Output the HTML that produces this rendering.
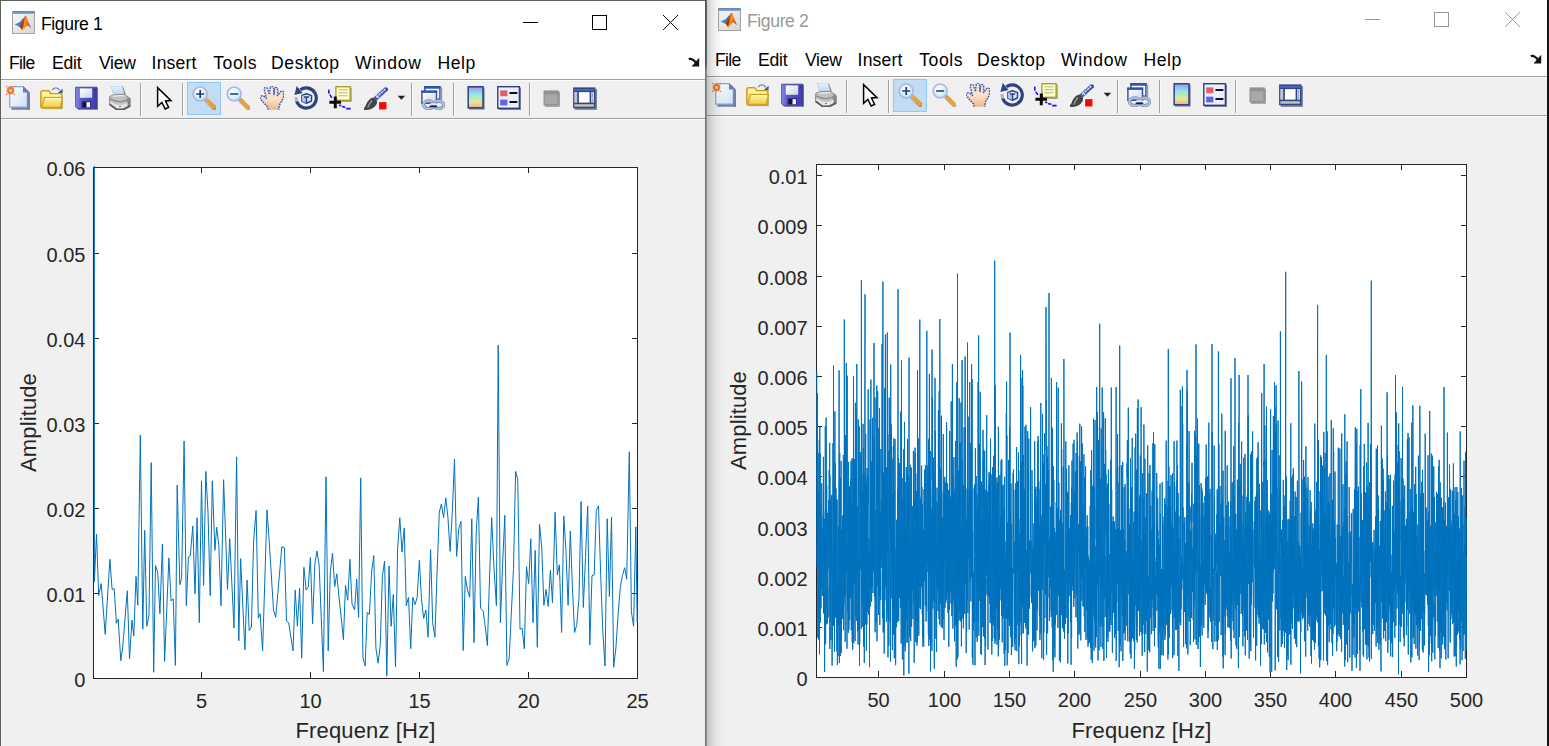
<!DOCTYPE html>
<html lang="de"><head><meta charset="utf-8"><title>Figure 1 / Figure 2</title>
<style>
html,body{margin:0;padding:0}
body{width:1549px;height:746px;overflow:hidden;background:#f0f0f0;font-family:"Liberation Sans", sans-serif;position:relative}
.abs{position:absolute}
.win{position:absolute;overflow:hidden;background:#f0f0f0}
.white{position:absolute;left:0;top:0;height:79px;background:#fff}
.title{position:absolute;left:41px;top:12px;font-size:17.6px;line-height:24px;white-space:nowrap}
.mi{position:absolute;top:50.5px;font-size:17.6px;line-height:24px;color:#000;white-space:nowrap}
.hl{position:absolute;left:0;height:1px;background:#a0a0a0;border-bottom:1px solid #fbfbfb}
.tb{position:absolute}
#b-top{position:absolute;left:0;top:0;width:707px;height:1px;background:#5b635c}
#b-left{position:absolute;left:0;top:0;width:1px;height:746px;background:#5b635c}
#b-mid{position:absolute;left:705px;top:0;width:1px;height:746px;background:linear-gradient(#4d554e 0,#4d554e 64px,#6a726b 70px,#6a726b 100%)}
#b-mid2{position:absolute;left:706px;top:0;width:1px;height:746px;background:linear-gradient(#5f6660 0,#5f6660 64px,#8f948f 70px,#8f948f 100%)}
#b-right{position:absolute;left:1547px;top:0;width:2px;height:746px;background:#141414}
#shadow{position:absolute;left:707px;top:0;width:20px;height:746px;background:linear-gradient(90deg,rgba(0,0,0,.2),rgba(0,0,0,.105) 25%,rgba(0,0,0,.045) 50%,rgba(0,0,0,.012) 75%,rgba(0,0,0,0))}
</style></head>
<body>
<svg width="0" height="0" style="position:absolute">
<defs>
<linearGradient id="gPage" x1="0" y1="0" x2="1" y2="1"><stop offset="0" stop-color="#ffffff"/><stop offset="1" stop-color="#cfe0f6"/></linearGradient>
<linearGradient id="gFold" x1="0" y1="0" x2="0" y2="1"><stop offset="0" stop-color="#fff6a2"/><stop offset="1" stop-color="#f3cc4a"/></linearGradient>
<linearGradient id="gFlop" x1="0" y1="0" x2="1" y2="0"><stop offset="0" stop-color="#8d8de6"/><stop offset="0.25" stop-color="#5a5ac8"/><stop offset="1" stop-color="#3d3da6"/></linearGradient>
<linearGradient id="gLabel" x1="0" y1="0" x2="1" y2="1"><stop offset="0" stop-color="#ffffff"/><stop offset="1" stop-color="#c9d3e6"/></linearGradient>
<radialGradient id="gLens" cx="0.4" cy="0.35" r="0.7"><stop offset="0" stop-color="#ffffff"/><stop offset="0.6" stop-color="#d8f2f4"/><stop offset="1" stop-color="#a8dfe6"/></radialGradient>
<linearGradient id="gHandle" x1="0" y1="0" x2="1" y2="0"><stop offset="0" stop-color="#f4b860"/><stop offset="1" stop-color="#d88a20"/></linearGradient>
<linearGradient id="gSkin" x1="0" y1="0" x2="0" y2="1"><stop offset="0" stop-color="#fee8d2"/><stop offset="0.55" stop-color="#fbe0c6"/><stop offset="1" stop-color="#e9b888"/></linearGradient>
<linearGradient id="gCbar" x1="0" y1="0" x2="0" y2="1"><stop offset="0.03" stop-color="#a09af0"/><stop offset="0.36" stop-color="#92e8e6"/><stop offset="0.72" stop-color="#e8e890"/><stop offset="1" stop-color="#f2ac8e"/></linearGradient>
<linearGradient id="gIcoBox" x1="0" y1="0" x2="1" y2="1"><stop offset="0" stop-color="#fafafa"/><stop offset="1" stop-color="#d4d4d4"/></linearGradient>
<linearGradient id="gIcoBar" x1="0" y1="0" x2="0" y2="1"><stop offset="0" stop-color="#4f7fb5"/><stop offset="1" stop-color="#86b4dc"/></linearGradient>
<linearGradient id="gMl1" x1="0" y1="0" x2="1" y2="0"><stop offset="0" stop-color="#4a9ad8"/><stop offset="1" stop-color="#2f6fb0"/></linearGradient>
<linearGradient id="gMl2" x1="0" y1="0" x2="1" y2="0.4"><stop offset="0" stop-color="#9a2a16"/><stop offset="0.42" stop-color="#e0641a"/><stop offset="0.58" stop-color="#f59a1c"/><stop offset="0.8" stop-color="#e2621c"/><stop offset="1" stop-color="#b23a1a"/></linearGradient>
<linearGradient id="gPrn" x1="0" y1="0" x2="0" y2="1"><stop offset="0" stop-color="#d8d8d8"/><stop offset="1" stop-color="#8a8a8a"/></linearGradient>
<linearGradient id="gPaper" x1="0" y1="0" x2="0" y2="1"><stop offset="0" stop-color="#e8f2fc"/><stop offset="1" stop-color="#b4d2f2"/></linearGradient>
<linearGradient id="gWin" x1="0" y1="0" x2="1" y2="1"><stop offset="0" stop-color="#ffffff"/><stop offset="1" stop-color="#cdd6e4"/></linearGradient>
<linearGradient id="gShadow" x1="0" y1="0" x2="1" y2="0"><stop offset="0" stop-color="#000" stop-opacity="0.22"/><stop offset="0.5" stop-color="#000" stop-opacity="0.07"/><stop offset="1" stop-color="#000" stop-opacity="0"/></linearGradient>

<symbol id="i-matlab" viewBox="0 0 23 23">
 <rect x="0.5" y="0.5" width="22" height="22" fill="url(#gIcoBox)" stroke="#a4a4a4"/>
 <rect x="0.4" y="0.3" width="22.2" height="2.7" fill="url(#gIcoBar)"/>
 <path d="M2.6 13.6 L8.0 10.9 L11.6 6.6 L9.6 13.4 L7.4 15.8 Z" fill="url(#gMl1)"/>
 <path d="M7.4 15.8 C9.6 13.4 11.0 8.6 12.4 6.0 C13.2 4.4 14.0 4.4 14.7 6.0 C15.9 9.0 17.3 14.6 19.2 16.8 C17.2 15.8 15.8 13.6 14.8 14.8 C13.4 16.4 11.8 19.0 10.2 19.6 C9.4 18.0 8.6 16.6 7.4 15.8 Z" fill="url(#gMl2)"/>
 <path d="M7.4 15.8 C9.4 13.6 10.8 9.4 12.2 6.4 C12.2 10 11.6 14.4 10.2 19.6 C9.4 18 8.6 16.6 7.4 15.8 Z" fill="#8f2a16" opacity="0.75"/>
 <path d="M10.2 19.6 C11.6 18.8 13.0 16.8 14.0 15.4 C12.8 15.8 11.4 16.8 9.7 18.4 Z" fill="#f9c21f"/>
</symbol>

<symbol id="i-new" viewBox="0 0 24 24">
 <path d="M5.4 2.4 H17.6 L23.9 8.4 V23.7 H5.4 Z" fill="#74809f"/>
 <path d="M3.7 0.7 H17 L21.3 5 V21.1 H3.7 Z" fill="url(#gPage)" stroke="#86a6e0" stroke-width="1.2"/>
 <path d="M17 0.2 L23.9 6.4 H17 Z" fill="#7579b9"/>
 <path d="M21.3 6.4 H23.9 V23.7 H21.3 Z" fill="#74809f"/>
 <path d="M17 0.2 L23.9 6.4 H21.3 L17 2.4Z" fill="#7478b4"/>
 <g fill="#e06a42"><rect x="-0.1" y="-0.1" width="1.3" height="1.3"/><rect x="7.8" y="-0.1" width="1.3" height="1.3"/><rect x="-0.1" y="7.8" width="1.3" height="1.3"/><rect x="7.8" y="7.8" width="1.3" height="1.3"/></g>
 <circle cx="4.5" cy="4.5" r="3.9" fill="#ea8a62"/>
 <circle cx="4.5" cy="4.5" r="2.9" fill="#e6733f"/>
 <rect x="3.2" y="3.2" width="2.6" height="2.6" fill="#f6d85c"/>
</symbol>

<symbol id="i-open" viewBox="0 0 24 24">
 <path d="M12.2 4.2 C13.6 1.2 17.6 0.8 19.6 4.4" fill="none" stroke="#7088b0" stroke-width="1.3"/>
 <path d="M18 6.8 L22.6 2.8 L22.6 7.4 Z" fill="#3f5a92"/>
 <path d="M2.6 21.6 H22 L23 12 V23.2 H4 Z" fill="#8a98b0" opacity="0.6"/>
 <path d="M0.8 6.6 Q0.8 4.7 2.8 4.7 H8.2 Q9.4 4.7 10 6 L10.8 7.6 H20 Q22 7.6 22 9.6 V20 Q22 22.2 19.8 22.2 H3 Q0.8 22.2 0.8 20 Z" fill="#f6dc62" stroke="#c89a1c" stroke-width="1.3"/>
 <path d="M2.2 5.9 H8.4 L9.6 8.6 H20.6 V10.6 H2.2 Z" fill="#fdf3a6"/>
 <path d="M1.6 21.2 L4.6 11.6 H22.4 L20.4 21.4 Z" fill="url(#gFold)" stroke="#cf9f1e" stroke-width="1.2" stroke-linejoin="round"/>
 <path d="M5.4 12.6 H21" stroke="#fffbd0" stroke-width="1"/>
</symbol>

<symbol id="i-save" viewBox="0 0 24 24">
 <path d="M2.6 2.2 H24 V24 H4.6 L2.6 22 Z" fill="#6a6e9a" opacity="0.75"/>
 <path d="M1.6 1.2 H23 V22.6 H3.4 L1.6 20.8 Z" fill="url(#gFlop)" stroke="#3b3b9c" stroke-width="0.8"/>
 <rect x="5.8" y="2.4" width="12.4" height="9.4" fill="url(#gLabel)"/>
 <rect x="20" y="3.4" width="1.4" height="1.8" fill="#2c2c80"/>
 <rect x="7.6" y="15" width="9.4" height="6.6" fill="#2f2f86"/>
 <rect x="8.6" y="16.2" width="3.4" height="5" fill="#16162a"/>
 <rect x="12.6" y="16.2" width="3.4" height="5" fill="#f2f4fa"/>
</symbol>

<symbol id="i-print" viewBox="0 0 24 24">
 <path d="M13.8 0.2 L15 0.7 L17.8 8.2 L16.2 8.6 Z" fill="#77777c"/>
 <path d="M3 0.2 H13.8 L16.4 8.6 L5.8 9.4 Z" fill="url(#gPaper)" stroke="#b4c8ee" stroke-width="0.6"/>
 <path d="M1.6 10.6 L5.4 8.8 L16.8 8.4 L22.2 12.6 V20.2 L15.4 23.8 H8.6 L1.6 18.6 Z" fill="#c2c2c2" stroke="#808080" stroke-width="0.9" stroke-linejoin="round"/>
 <path d="M19.4 10.6 L22.2 12.8 V20.2 L19.4 21.8 Z" fill="#858585"/>
 <path d="M2 12.8 Q8 15.8 12 15.6 Q16 15.6 21.6 12.6" fill="none" stroke="#8e8e8e" stroke-width="1.3"/>
 <path d="M2.2 15.6 L9 18.8 H15.2 L19.4 16.8 V20.6 L15.2 22.6 H9 L2.2 17.8 Z" fill="#e6e6e6"/>
 <path d="M1.6 18.2 L8.6 23.4 H15.4 L22.2 19.8 " fill="none" stroke="#5e5e5e" stroke-width="1.9"/>
 <path d="M5 10.2 Q10 9.4 16 9.6" fill="none" stroke="#ededed" stroke-width="1.2"/>
 <rect x="17.8" y="14.2" width="1.6" height="1.6" fill="#58b058"/>
 <rect x="11.2" y="19.8" width="1.6" height="1.2" fill="#6a6ac8"/>
</symbol>

<symbol id="i-arrow" viewBox="0 0 24 24">
 <path d="M5.6 1.6 V20.4 L9.9 16.4 L13.2 23 L16.6 21.3 L13.5 15 L19 14.6 Z" fill="#fff" stroke="#000" stroke-width="1.5" stroke-linejoin="miter"/>
</symbol>

<symbol id="i-zoomin" viewBox="0 0 24 24">
 <path d="M14.2 13.6 L22.4 21.8" stroke="#8a6a4a" stroke-width="4.6" stroke-linecap="round" opacity="0.55" transform="translate(0.6,0.9)"/>
 <path d="M13 12.6 L15.4 15" stroke="#8f98c8" stroke-width="2.6"/>
 <path d="M15.6 14.8 L22 21.2" stroke="url(#gHandle)" stroke-width="4.2" stroke-linecap="round"/>
 <path d="M15.6 14.8 L22 21.2" stroke="#eaa03a" stroke-width="3" stroke-linecap="round"/>
 <circle cx="8.2" cy="8" r="7" fill="url(#gLens)" stroke="#b2b6e6" stroke-width="1.7"/>
 <path d="M8.2 4 V12 M4.2 8 H12.2" stroke="#1f3c7e" stroke-width="1.7"/>
</symbol>

<symbol id="i-zoomout" viewBox="0 0 24 24">
 <path d="M14.2 13.6 L22.4 21.8" stroke="#8a6a4a" stroke-width="4.6" stroke-linecap="round" opacity="0.55" transform="translate(0.6,0.9)"/>
 <path d="M13 12.6 L15.4 15" stroke="#8f98c8" stroke-width="2.6"/>
 <path d="M15.6 14.8 L22 21.2" stroke="#eaa03a" stroke-width="3.6" stroke-linecap="round"/>
 <circle cx="8.2" cy="8" r="7" fill="url(#gLens)" stroke="#b2b6e6" stroke-width="1.7"/>
 <path d="M4.2 8 H12.2" stroke="#2a4a8a" stroke-width="1.7"/>
</symbol>

<symbol id="i-hand" viewBox="0 0 24 24">
 <path d="M8.1 23.7 L7.6 21 L3.2 16.3 L0.5 12.6 Q-0.1 10.8 1.6 9.9 Q3 9.5 4.4 10.8 L6.4 12.4 L4.4 4.2 Q3.9 1.8 5.6 1.5 Q7.2 1.3 7.8 3.4 L9.4 8.6 L10.2 2 Q10.3 0.2 11.9 0.2 Q13.6 0.2 13.7 2 L14 8.4 L14.6 3 Q14.9 1.4 16.2 1.5 Q17.8 1.7 17.6 3.4 L17.6 9.4 L20.6 5.8 Q21.8 4.6 23 5.4 Q24.1 6.2 23.6 8 L23.5 11.4 L21.6 15.3 L19.6 18.7 L18.7 23.7 Z" fill="url(#gSkin)"/>
 <path d="M8.1 23.7 L7.6 21 L3.2 16.3 L0.5 12.6 Q-0.1 10.8 1.6 9.9 Q3 9.5 4.4 10.8 L6.4 12.4 L4.4 4.2 Q3.9 1.8 5.6 1.5 Q7.2 1.3 7.8 3.4 L9.4 8.6 L10.2 2 Q10.3 0.2 11.9 0.2 Q13.6 0.2 13.7 2 L14 8.4 L14.6 3 Q14.9 1.4 16.2 1.5 Q17.8 1.7 17.6 3.4 L17.6 9.4 L20.6 5.8 Q21.8 4.6 23 5.4 Q24.1 6.2 23.6 8 L23.5 11.4 L21.6 15.3 L19.6 18.7 L18.7 23.7" fill="none" stroke="#3a5abf" stroke-width="1.5" stroke-dasharray="1.7 1.0" stroke-linejoin="round"/>
</symbol>

<symbol id="i-rotate" viewBox="0 0 24 24">
 <path d="M2.7 15.45 A10.1 10.1 0 0 1 2.14 11.1" fill="none" stroke="#2c4382" stroke-width="3" opacity="0.35"/>
 <path d="M6.4 3.7 A10.1 10.1 0 1 1 2.7 15.45" fill="none" stroke="#2c4382" stroke-width="3.2"/>
 <path d="M2.7 0.1 L0.4 8.9 L8.6 7.0 Z" fill="#2f4684"/>
 <path d="M7.8 9.4 L12.6 7.8 L17.6 9.6 L17.4 15 L12.4 17.2 L7.8 15 Z" fill="#dfe6f5" stroke="#2f4684" stroke-width="1.5" stroke-linejoin="round"/>
 <path d="M7.8 9.4 L12.5 11.2 L12.4 17.2 Z M7.8 9.4 L7.8 15 L12.4 17.2Z" fill="#b4c4e8"/>
 <path d="M10 11 H15.2 M12.5 11 V17" fill="none" stroke="#2f4684" stroke-width="1.4"/>
</symbol>

<symbol id="i-datacursor" viewBox="0 0 24 24">
 <rect x="8.8" y="1.6" width="15" height="14.4" fill="#7f7f60" opacity="0.65"/>
 <rect x="7.9" y="0.7" width="14.2" height="13.6" fill="#fdfdc6" stroke="#a39b32" stroke-width="1.3"/>
 <path d="M10.4 3.8 H19.6 M10.4 6.8 H19.6 M10.4 9.8 H19.6" stroke="#bcb88c" stroke-width="1.1"/>
 <path d="M0.7 3.6 L0.9 7.6 M1.8 8.6 L3.8 11.8" stroke="#1a10f4" stroke-width="1.6"/>
 <path d="M11 19.3 L13.4 19.6 M14.2 20.6 L17.4 21.2 M18.2 22.6 L22.6 22.6" stroke="#1a10f4" stroke-width="1.6"/>
 <path d="M7.3 10.6 V22.2 M1.4 16.3 H13" stroke="#0a0a0a" stroke-width="3"/>
</symbol>

<symbol id="i-brush" viewBox="0 0 24 24">
 <path d="M22.6 2.6 L10.8 13.4" stroke="#4853b4" stroke-width="4.2"/>
 <path d="M22.9 0.9 L24.6 4.6 L20.8 4.2 Z" fill="#2f3a9c"/>
 <path d="M21.4 3 L11.6 12" stroke="#dfe4fb" stroke-width="1.5" stroke-dasharray="2.6 0.7"/>
 <path d="M12.7 9.4 L14.9 11.8" stroke="#eef0fc" stroke-width="1.2"/>
 <path d="M9.2 12 L12.6 15.2 C13 19.6 8.4 23.6 0.6 23.8 C-0.4 22.6 1 21.4 1.8 20.4 C3 17.4 4.6 13 9.2 12 Z" fill="#454545" stroke="#2c2c2c" stroke-width="0.8"/>
 <path d="M8 14.6 C5.6 16.4 5 19.4 3.6 21.6" fill="none" stroke="#9a9a9a" stroke-width="1.4"/>
 <rect x="14.3" y="15.4" width="9" height="8.8" fill="#fdfdfd"/>
 <rect x="15.1" y="16.1" width="7.4" height="7.4" fill="#f20a0a"/>
</symbol>

<symbol id="i-link" viewBox="0 0 24 24">
 <rect x="20" y="1.6" width="1.2" height="12.4" fill="#6a7898" opacity="0.7"/>
 <rect x="3.9" y="0.8" width="15" height="12.4" fill="#f4f6fa" stroke="#30509a" stroke-width="1.4"/>
 <rect x="3.2" y="0.1" width="16.4" height="2.6" fill="#3453a4"/>
 <rect x="0.9" y="5.3" width="14.6" height="12" fill="url(#gWin)" stroke="#30509a" stroke-width="1.4"/>
 <rect x="0.2" y="4.6" width="16" height="2.3" fill="#3453a4"/>
 <ellipse cx="7.6" cy="18.8" rx="5.2" ry="3.9" fill="none" stroke="#b7c7e1" stroke-width="2.7"/>
 <ellipse cx="17.6" cy="18.8" rx="5.2" ry="3.9" fill="none" stroke="#b7c7e1" stroke-width="2.7"/>
 <ellipse cx="7.6" cy="18.8" rx="6.4" ry="5.1" fill="none" stroke="#6c80a6" stroke-width="0.7"/>
 <ellipse cx="17.6" cy="18.8" rx="6.4" ry="5.1" fill="none" stroke="#6c80a6" stroke-width="0.7"/>
 <ellipse cx="7.6" cy="18.8" rx="3.9" ry="2.6" fill="none" stroke="#55698f" stroke-width="0.8"/>
 <ellipse cx="17.6" cy="18.8" rx="3.9" ry="2.6" fill="none" stroke="#55698f" stroke-width="0.8"/>
 <path d="M9.4 20.4 H15.4" stroke="#16264a" stroke-width="1.7" stroke-linecap="round"/>
 <path d="M9.6 18.2 H15.6" stroke="#dfe8f6" stroke-width="1.8" stroke-linecap="round"/>
</symbol>

<symbol id="i-colorbar" viewBox="0 0 24 24">
 <rect x="5" y="1.6" width="15.6" height="22" fill="#66708c" opacity="0.85"/>
 <rect x="4.2" y="0.8" width="14.8" height="21" fill="url(#gCbar)" stroke="#2c3f86" stroke-width="1.5"/>
</symbol>

<symbol id="i-legend" viewBox="0 0 24 24">
 <rect x="1.6" y="1.6" width="22.4" height="22.4" fill="#5a6488" opacity="0.8"/>
 <rect x="0.8" y="0.7" width="21.6" height="21.6" fill="#e9eef9" stroke="#2c3f86" stroke-width="1.4"/>
 <rect x="3.2" y="4.4" width="7.2" height="5.8" fill="#e26060"/>
 <rect x="3.2" y="13.6" width="7.2" height="5.8" fill="#6262e2"/>
 <path d="M13.2 6.9 H19.6 M13.2 15.9 H19.6" stroke="#111" stroke-width="2" stroke-linecap="round"/>
</symbol>

<symbol id="i-graysq" viewBox="0 0 24 24">
 <rect x="4.7" y="5.6" width="15.2" height="15.2" fill="#9b9b9b"/>
 <rect x="3.5" y="4.4" width="15.2" height="14.8" fill="#929292"/>
 <rect x="4.8" y="8.4" width="12.6" height="9.6" fill="#a9a9a9"/>
</symbol>

<symbol id="i-dock" viewBox="0 0 24 24">
 <rect x="1.6" y="3" width="22.4" height="20.9" fill="#66708c" opacity="0.85"/>
 <rect x="0.1" y="1.4" width="22.3" height="20.8" fill="#2f4585"/>
 <rect x="1" y="2.9" width="20.5" height="1.9" fill="#4a66b8"/>
 <rect x="1.4" y="6.1" width="2.8" height="10.5" fill="#f0f0e6"/>
 <rect x="18.2" y="6.1" width="2.7" height="10.5" fill="#f0f0e6"/>
 <path d="M3.4 6.6 q-1.4 1.2 0 2.4 q-1.4 1.2 0 2.4 q-1.4 1.2 0 2.4 q-1.4 1.2 0 2.4 M19 6.6 q1.4 1.2 0 2.4 q1.4 1.2 0 2.4 q1.4 1.2 0 2.4 q1.4 1.2 0 2.4" fill="none" stroke="#6a7cb0" stroke-width="0.8"/>
 <rect x="5.9" y="6.1" width="10.7" height="10.5" fill="#fff"/>
 <rect x="1.4" y="18.1" width="19.5" height="2.6" fill="#c8c5b6"/>
 <path d="M1.6 18.5 H20.8" stroke="#8e94a8" stroke-width="0.8" stroke-dasharray="1.2 0.9"/>
</symbol>
</defs>
</svg>
<div class="win" style="left:0px;top:0px;width:705px;height:746px">
<div class="white" style="width:705px"></div>
<svg class="abs" style="left:12.3px;top:10.8px" width="23" height="23"><use href="#i-matlab" width="23" height="23"/></svg>
<div class="title" id="title1" style="color:#000;letter-spacing:-0.40px">Figure 1</div>
<svg class="abs" style="left:0px;top:0" width="705" height="45" viewBox="0 0 705 45" shape-rendering="crispEdges"><rect x="523" y="22" width="15" height="1" fill="#000"/><rect x="592.5" y="15.5" width="14" height="14" fill="none" stroke="#000" stroke-width="1"/><path d="M663 15 L678 30 M678 15 L663 30" stroke="#000" stroke-width="0.95" shape-rendering="geometricPrecision"/></svg>
<span class="mi" id="m1_0" style="left:8.90px;letter-spacing:-0.67px">File</span>
<span class="mi" id="m1_1" style="left:52.10px;letter-spacing:-0.27px">Edit</span>
<span class="mi" id="m1_2" style="left:98.90px;letter-spacing:-0.27px">View</span>
<span class="mi" id="m1_3" style="left:151.60px;letter-spacing:0.16px">Insert</span>
<span class="mi" id="m1_4" style="left:213.20px;letter-spacing:0.60px">Tools</span>
<span class="mi" id="m1_5" style="left:271.00px;letter-spacing:0.60px">Desktop</span>
<span class="mi" id="m1_6" style="left:354.90px;letter-spacing:0.72px">Window</span>
<span class="mi" id="m1_7" style="left:437.40px;letter-spacing:0.53px">Help</span>
<svg class="abs" style="left:688px;top:57px" width="13" height="11" viewBox="0 0 13 11"><path d="M0.8 2.2 C3 1 5 2 8.6 6.2" fill="none" stroke="#111" stroke-width="2.2"/><path d="M11.2 0.8 V9.6 H3.6 Z" fill="#111"/></svg>
<div class="hl" style="top:79px;width:705px"></div>
<div class="hl" style="top:118px;width:705px"></div>
<svg class="tb" style="left:0px;top:0px" width="700" height="122" viewBox="0 0 700 122"><rect x="187.5" y="82.5" width="33" height="32" fill="#c2dcf3" stroke="#90c8f6"/><rect x="140" y="83" width="1" height="33" fill="#a0a0a0"/><rect x="141" y="83" width="1" height="33" fill="#fbfbfb"/><rect x="182" y="83" width="1" height="33" fill="#a0a0a0"/><rect x="183" y="83" width="1" height="33" fill="#fbfbfb"/><rect x="411" y="83" width="1" height="33" fill="#a0a0a0"/><rect x="412" y="83" width="1" height="33" fill="#fbfbfb"/><rect x="453" y="83" width="1" height="33" fill="#a0a0a0"/><rect x="454" y="83" width="1" height="33" fill="#fbfbfb"/><rect x="529" y="83" width="1" height="33" fill="#a0a0a0"/><rect x="530" y="83" width="1" height="33" fill="#fbfbfb"/><use href="#i-new" x="6" y="86" width="24" height="24"/><use href="#i-open" x="40" y="86" width="24" height="24"/><use href="#i-save" x="74" y="86" width="24" height="24"/><use href="#i-print" x="108" y="86" width="24" height="24"/><use href="#i-arrow" x="152" y="86" width="24" height="24"/><use href="#i-zoomin" x="192" y="86" width="24" height="24"/><use href="#i-zoomout" x="226" y="86" width="24" height="24"/><use href="#i-hand" x="260" y="86" width="24" height="24"/><use href="#i-rotate" x="294" y="86" width="24" height="24"/><use href="#i-datacursor" x="328" y="86" width="24" height="24"/><use href="#i-brush" x="364" y="86" width="24" height="24"/><use href="#i-link" x="421" y="86" width="24" height="24"/><use href="#i-colorbar" x="464" y="86" width="24" height="24"/><use href="#i-legend" x="497" y="86" width="24" height="24"/><use href="#i-graysq" x="540" y="86" width="24" height="24"/><use href="#i-dock" x="573" y="86" width="24" height="24"/><path d="M397.6 95.8 H405.2 L401.4 99.8 Z" fill="#222"/></svg>
</div>
<div class="win" style="left:706px;top:-3px;width:841px;height:749px">
<div class="white" style="width:841px"></div>
<svg class="abs" style="left:12.3px;top:10.8px" width="23" height="23"><use href="#i-matlab" width="23" height="23"/></svg>
<div class="title" id="title2" style="color:#999;letter-spacing:-0.40px">Figure 2</div>
<svg class="abs" style="left:136px;top:0" width="705" height="45" viewBox="0 0 705 45" shape-rendering="crispEdges"><rect x="523" y="22" width="15" height="1" fill="#999"/><rect x="592.5" y="15.5" width="14" height="14" fill="none" stroke="#999" stroke-width="1"/><path d="M663 15 L678 30 M678 15 L663 30" stroke="#999" stroke-width="0.95" shape-rendering="geometricPrecision"/></svg>
<span class="mi" id="m2_0" style="left:8.90px;letter-spacing:-0.67px">File</span>
<span class="mi" id="m2_1" style="left:52.10px;letter-spacing:-0.27px">Edit</span>
<span class="mi" id="m2_2" style="left:98.90px;letter-spacing:-0.27px">View</span>
<span class="mi" id="m2_3" style="left:151.60px;letter-spacing:0.16px">Insert</span>
<span class="mi" id="m2_4" style="left:213.20px;letter-spacing:0.60px">Tools</span>
<span class="mi" id="m2_5" style="left:271.00px;letter-spacing:0.60px">Desktop</span>
<span class="mi" id="m2_6" style="left:354.90px;letter-spacing:0.72px">Window</span>
<span class="mi" id="m2_7" style="left:437.40px;letter-spacing:0.53px">Help</span>
<svg class="abs" style="left:824px;top:57px" width="13" height="11" viewBox="0 0 13 11"><path d="M0.8 2.2 C3 1 5 2 8.6 6.2" fill="none" stroke="#111" stroke-width="2.2"/><path d="M11.2 0.8 V9.6 H3.6 Z" fill="#111"/></svg>
<div class="hl" style="top:79px;width:841px"></div>
<div class="hl" style="top:118px;width:841px"></div>
<svg class="tb" style="left:0px;top:0px" width="700" height="122" viewBox="0 0 700 122"><rect x="187.5" y="82.5" width="33" height="32" fill="#c2dcf3" stroke="#90c8f6"/><rect x="140" y="83" width="1" height="33" fill="#a0a0a0"/><rect x="141" y="83" width="1" height="33" fill="#fbfbfb"/><rect x="182" y="83" width="1" height="33" fill="#a0a0a0"/><rect x="183" y="83" width="1" height="33" fill="#fbfbfb"/><rect x="411" y="83" width="1" height="33" fill="#a0a0a0"/><rect x="412" y="83" width="1" height="33" fill="#fbfbfb"/><rect x="453" y="83" width="1" height="33" fill="#a0a0a0"/><rect x="454" y="83" width="1" height="33" fill="#fbfbfb"/><rect x="529" y="83" width="1" height="33" fill="#a0a0a0"/><rect x="530" y="83" width="1" height="33" fill="#fbfbfb"/><use href="#i-new" x="6" y="86" width="24" height="24"/><use href="#i-open" x="40" y="86" width="24" height="24"/><use href="#i-save" x="74" y="86" width="24" height="24"/><use href="#i-print" x="108" y="86" width="24" height="24"/><use href="#i-arrow" x="152" y="86" width="24" height="24"/><use href="#i-zoomin" x="192" y="86" width="24" height="24"/><use href="#i-zoomout" x="226" y="86" width="24" height="24"/><use href="#i-hand" x="260" y="86" width="24" height="24"/><use href="#i-rotate" x="294" y="86" width="24" height="24"/><use href="#i-datacursor" x="328" y="86" width="24" height="24"/><use href="#i-brush" x="364" y="86" width="24" height="24"/><use href="#i-link" x="421" y="86" width="24" height="24"/><use href="#i-colorbar" x="464" y="86" width="24" height="24"/><use href="#i-legend" x="497" y="86" width="24" height="24"/><use href="#i-graysq" x="540" y="86" width="24" height="24"/><use href="#i-dock" x="573" y="86" width="24" height="24"/><path d="M397.6 95.8 H405.2 L401.4 99.8 Z" fill="#222"/></svg>
</div>
<svg class="abs" style="left:0;top:0" width="1549" height="746" viewBox="0 0 1549 746"><rect x="93" y="167" width="544" height="511" fill="#fff"/><clipPath id="c1"><rect x="93" y="166" width="545.5" height="513"/></clipPath><g fill="#262626" shape-rendering="crispEdges"><rect x="93" y="167" width="545" height="1"/><rect x="93" y="678" width="545" height="1"/><rect x="93" y="167" width="1" height="512"/><rect x="637" y="167" width="1" height="512"/><rect x="201" y="672" width="1" height="6"/><rect x="201" y="167" width="1" height="6"/><rect x="310" y="672" width="1" height="6"/><rect x="310" y="167" width="1" height="6"/><rect x="419" y="672" width="1" height="6"/><rect x="419" y="167" width="1" height="6"/><rect x="528" y="672" width="1" height="6"/><rect x="528" y="167" width="1" height="6"/><rect x="637" y="672" width="1" height="6"/><rect x="637" y="167" width="1" height="6"/><rect x="93" y="167" width="6" height="1"/><rect x="632" y="167" width="6" height="1"/><rect x="93" y="253" width="6" height="1"/><rect x="632" y="253" width="6" height="1"/><rect x="93" y="338" width="6" height="1"/><rect x="632" y="338" width="6" height="1"/><rect x="93" y="423" width="6" height="1"/><rect x="632" y="423" width="6" height="1"/><rect x="93" y="508" width="6" height="1"/><rect x="632" y="508" width="6" height="1"/><rect x="93" y="593" width="6" height="1"/><rect x="632" y="593" width="6" height="1"/><rect x="93" y="678" width="6" height="1"/><rect x="632" y="678" width="6" height="1"/></g><polyline clip-path="url(#c1)" points="94.4,150.0 94.4,581.5 96.5,534.0 98.7,595.5 101.2,583.6 105.2,634.3 109.9,559.3 112.1,589.4 114.2,588.7 116.4,623.4 118.2,619.1 120.8,660.7 122.6,648.0 127.3,590.8 129.5,658.9 132.0,620.1 133.8,636.1 136.0,576.4 137.8,605.3 140.3,435.2 142.8,629.2 144.7,530.4 146.8,626.3 149.0,615.4 151.2,462.7 153.7,672.3 155.5,565.5 157.7,572.0 159.9,613.6 162.4,544.1 164.6,661.4 168.9,557.9 171.1,601.0 173.2,598.8 175.4,665.4 177.2,485.1 179.8,584.7 181.6,578.5 184.1,441.0 186.3,605.7 188.4,556.8 190.3,555.7 192.8,526.0 195.0,593.7 197.1,517.7 199.3,622.7 201.5,480.8 203.6,585.4 205.8,471.4 208.0,512.3 210.2,595.5 212.3,480.8 214.9,550.3 216.7,527.1 218.8,544.9 221.0,605.7 223.6,479.7 227.5,589.4 229.7,538.7 234.0,628.1 236.6,456.9 238.8,640.8 240.6,558.6 244.9,649.8 247.1,580.0 249.2,630.6 251.4,627.0 253.6,541.2 256.1,510.5 258.3,618.3 260.1,613.6 262.6,650.9 267.0,509.8 269.2,541.2 273.5,610.0 275.7,617.3 277.8,593.7 281.8,546.7 284.4,547.8 286.5,620.9 288.7,622.7 290.9,637.2 293.0,650.9 295.2,590.1 297.4,626.3 299.6,588.3 301.7,658.2 303.9,567.3 306.1,590.1 308.2,587.2 310.4,557.5 312.6,623.8 314.8,564.8 316.9,551.0 319.1,564.8 323.4,671.5 326.0,476.8 328.2,650.9 330.3,572.0 332.5,553.2 334.7,586.5 336.8,573.8 339.0,597.3 341.2,617.3 343.4,639.7 345.5,585.4 347.7,600.2 349.9,559.3 352.0,603.9 354.6,610.0 356.7,579.2 358.6,617.3 360.7,477.9 362.9,657.1 365.1,666.1 367.2,612.5 369.4,614.4 371.6,572.0 373.8,555.7 375.9,648.0 378.1,663.2 380.3,644.4 382.4,575.6 384.6,561.2 386.8,676.2 389.0,565.9 391.1,626.3 393.3,594.5 395.5,666.8 397.6,548.5 399.8,517.7 402.0,552.1 404.2,527.9 406.3,605.7 408.5,597.3 410.7,648.7 412.8,597.3 415.0,604.6 417.2,597.3 419.4,560.1 421.5,599.9 423.7,618.3 425.9,610.0 428.0,637.2 430.6,549.6 432.7,622.7 434.9,637.2 437.1,572.0 439.3,512.3 441.4,504.0 443.6,517.7 445.8,497.8 447.9,517.0 450.1,551.4 452.3,512.3 454.5,459.1 456.6,556.4 458.8,528.6 461.0,521.3 463.2,650.5 465.3,576.4 467.5,590.1 469.7,597.3 471.8,518.8 474.0,642.6 476.2,532.2 478.4,497.1 480.5,608.2 483.1,610.7 485.2,626.3 487.4,645.5 489.6,575.6 491.7,517.7 493.9,566.6 496.4,605.7 498.2,345.1 500.4,622.7 502.6,564.8 504.8,515.2 506.9,665.4 509.1,658.9 513.5,568.4 515.6,471.4 517.8,479.7 520.0,629.2 522.1,628.1 524.3,648.7 526.5,566.6 528.7,583.6 530.8,538.7 533.0,622.7 535.2,550.3 537.3,647.3 539.5,524.2 541.7,546.7 543.9,605.3 546.0,589.4 548.2,606.4 550.4,570.2 552.5,602.8 555.1,512.3 557.3,574.9 559.4,564.8 561.6,632.5 563.8,515.9 565.9,550.3 568.1,605.3 570.3,531.1 572.5,590.1 574.6,632.5 576.8,624.5 579.0,597.3 581.1,501.4 583.3,607.5 585.5,557.5 587.7,506.1 589.8,645.1 592.0,575.6 594.2,574.9 596.3,510.5 598.5,505.8 600.7,575.6 602.9,633.5 605.0,666.1 607.2,518.8 609.4,596.6 611.5,517.0 613.7,667.2 615.9,648.0 618.1,614.7 620.2,588.3 622.4,575.6 624.6,567.7 626.7,579.2 629.3,451.8 631.4,611.8 633.6,626.3 635.8,526.8 637.2,622.7" fill="none" stroke="#0072bd" stroke-width="1" stroke-linejoin="round"/><g fill="#262626" font-family='"Liberation Sans", sans-serif' font-size="20"><text x="201.5" y="708" text-anchor="middle">5</text><text x="310.5" y="708" text-anchor="middle">10</text><text x="419.5" y="708" text-anchor="middle">15</text><text x="528.5" y="708" text-anchor="middle">20</text><text x="637.5" y="708" text-anchor="middle">25</text><text x="85.4" y="175.7" text-anchor="end">0.06</text><text x="85.4" y="261.7" text-anchor="end">0.05</text><text x="85.4" y="346.7" text-anchor="end">0.04</text><text x="85.4" y="431.7" text-anchor="end">0.03</text><text x="85.4" y="516.7" text-anchor="end">0.02</text><text x="85.4" y="601.7" text-anchor="end">0.01</text><text x="85.4" y="686.7" text-anchor="end">0</text><text x="365.5" y="738" text-anchor="middle" font-size="22" letter-spacing="0.15">Frequenz [Hz]</text><text transform="translate(35.5,422.5) rotate(-90)" text-anchor="middle" font-size="22" letter-spacing="0.12">Amplitude</text></g><rect x="816" y="164" width="650" height="513" fill="#fff"/><clipPath id="c2"><rect x="816" y="164" width="651.5" height="514"/></clipPath><g fill="#262626" shape-rendering="crispEdges"><rect x="816" y="164" width="651" height="1"/><rect x="816" y="677" width="651" height="1"/><rect x="816" y="164" width="1" height="514"/><rect x="1466" y="164" width="1" height="514"/><rect x="878" y="671" width="1" height="6"/><rect x="878" y="164" width="1" height="6"/><rect x="944" y="671" width="1" height="6"/><rect x="944" y="164" width="1" height="6"/><rect x="1009" y="671" width="1" height="6"/><rect x="1009" y="164" width="1" height="6"/><rect x="1074" y="671" width="1" height="6"/><rect x="1074" y="164" width="1" height="6"/><rect x="1140" y="671" width="1" height="6"/><rect x="1140" y="164" width="1" height="6"/><rect x="1205" y="671" width="1" height="6"/><rect x="1205" y="164" width="1" height="6"/><rect x="1270" y="671" width="1" height="6"/><rect x="1270" y="164" width="1" height="6"/><rect x="1335" y="671" width="1" height="6"/><rect x="1335" y="164" width="1" height="6"/><rect x="1401" y="671" width="1" height="6"/><rect x="1401" y="164" width="1" height="6"/><rect x="1466" y="671" width="1" height="6"/><rect x="1466" y="164" width="1" height="6"/><rect x="816" y="677" width="6" height="1"/><rect x="1461" y="677" width="6" height="1"/><rect x="816" y="627" width="6" height="1"/><rect x="1461" y="627" width="6" height="1"/><rect x="816" y="577" width="6" height="1"/><rect x="1461" y="577" width="6" height="1"/><rect x="816" y="527" width="6" height="1"/><rect x="1461" y="527" width="6" height="1"/><rect x="816" y="476" width="6" height="1"/><rect x="1461" y="476" width="6" height="1"/><rect x="816" y="426" width="6" height="1"/><rect x="1461" y="426" width="6" height="1"/><rect x="816" y="376" width="6" height="1"/><rect x="1461" y="376" width="6" height="1"/><rect x="816" y="326" width="6" height="1"/><rect x="1461" y="326" width="6" height="1"/><rect x="816" y="276" width="6" height="1"/><rect x="1461" y="276" width="6" height="1"/><rect x="816" y="225" width="6" height="1"/><rect x="1461" y="225" width="6" height="1"/><rect x="816" y="175" width="6" height="1"/><rect x="1461" y="175" width="6" height="1"/></g><polyline clip-path="url(#c2)" points="816.8,371.0 816.9,498.5 817.1,566.9 817.2,512.6 817.4,393.5 817.5,549.6 817.6,556.3 817.8,637.7 817.9,596.2 818.1,556.6 818.2,522.6 818.4,492.2 818.5,576.9 818.6,639.5 818.8,592.9 818.9,452.7 819.1,606.4 819.2,565.0 819.3,440.5 819.5,654.4 819.6,538.8 819.8,426.9 819.9,603.4 820.0,548.5 820.2,453.6 820.3,622.8 820.5,553.1 820.6,507.3 820.8,525.6 820.9,562.8 821.0,608.3 821.2,559.0 821.3,579.0 821.5,561.3 821.6,580.2 821.7,483.2 821.9,503.3 822.0,589.1 822.2,544.8 822.3,595.7 822.4,565.8 822.6,582.6 822.7,528.8 822.9,579.8 823.0,565.0 823.2,515.8 823.3,572.8 823.4,456.9 823.6,613.5 823.7,511.0 823.9,571.4 824.0,570.8 824.1,534.0 824.3,554.5 824.4,572.9 824.6,672.0 824.7,633.0 824.8,518.9 825.0,554.6 825.1,521.9 825.3,426.3 825.4,524.9 825.6,644.2 825.7,591.0 825.8,542.8 826.0,603.9 826.1,417.6 826.3,435.8 826.4,482.7 826.5,564.1 826.7,485.2 826.8,624.3 827.0,591.4 827.1,565.9 827.3,512.9 827.4,562.2 827.5,623.2 827.7,585.8 827.8,589.1 828.0,593.1 828.1,617.5 828.2,574.3 828.4,568.9 828.5,505.6 828.7,500.0 828.8,556.6 828.9,567.0 829.1,505.1 829.2,470.0 829.4,528.7 829.5,499.4 829.7,442.9 829.8,648.9 829.9,475.2 830.1,597.8 830.2,565.0 830.4,500.9 830.5,520.3 830.6,621.7 830.8,532.6 830.9,640.0 831.1,584.7 831.2,496.9 831.3,573.3 831.5,544.0 831.6,518.4 831.8,494.7 831.9,511.0 832.1,665.6 832.2,574.7 832.3,567.7 832.5,644.2 832.6,554.7 832.8,543.0 832.9,493.0 833.0,443.3 833.2,626.0 833.3,606.4 833.5,365.4 833.6,625.1 833.7,607.6 833.9,549.2 834.0,617.7 834.2,506.3 834.3,484.2 834.5,651.8 834.6,556.6 834.7,502.6 834.9,411.3 835.0,599.0 835.2,617.8 835.3,477.2 835.4,463.1 835.6,612.5 835.7,571.8 835.9,521.5 836.0,488.4 836.1,618.0 836.3,532.7 836.4,499.7 836.6,553.8 836.7,618.7 836.9,651.1 837.0,597.8 837.1,499.7 837.3,647.8 837.4,664.8 837.6,584.7 837.7,641.9 837.8,621.7 838.0,656.2 838.1,558.0 838.3,526.1 838.4,574.0 838.5,624.7 838.7,589.5 838.8,546.5 839.0,444.4 839.1,370.4 839.3,604.5 839.4,663.1 839.5,492.5 839.7,453.0 839.8,568.6 840.0,508.6 840.1,480.3 840.2,542.6 840.4,477.8 840.5,655.8 840.7,599.1 840.8,598.1 840.9,627.5 841.1,460.9 841.2,652.9 841.4,530.1 841.5,639.5 841.7,584.0 841.8,574.7 841.9,614.9 842.1,557.5 842.2,555.1 842.4,591.0 842.5,515.6 842.6,618.9 842.8,612.6 842.9,584.7 843.1,580.7 843.2,610.0 843.4,455.0 843.5,491.0 843.6,630.2 843.8,581.9 843.9,605.0 844.1,568.4 844.2,597.3 844.3,319.5 844.5,451.9 844.6,579.5 844.8,532.8 844.9,543.0 845.0,510.5 845.2,641.7 845.3,512.1 845.5,435.3 845.6,541.2 845.8,594.9 845.9,527.6 846.0,519.1 846.2,530.6 846.3,363.0 846.5,406.6 846.6,426.6 846.7,571.6 846.9,542.2 847.0,648.7 847.2,375.7 847.3,490.9 847.4,533.8 847.6,506.5 847.7,612.2 847.9,590.7 848.0,601.3 848.2,541.0 848.3,632.9 848.4,461.9 848.6,564.4 848.7,567.3 848.9,629.6 849.0,522.9 849.1,490.0 849.3,534.0 849.4,601.6 849.6,498.6 849.7,620.2 849.8,486.2 850.0,542.8 850.1,593.0 850.3,554.7 850.4,533.4 850.6,598.2 850.7,479.0 850.8,570.2 851.0,460.9 851.1,482.5 851.3,630.4 851.4,529.3 851.5,588.8 851.7,505.1 851.8,548.7 852.0,563.5 852.1,458.5 852.2,642.0 852.4,545.7 852.5,585.4 852.7,649.7 852.8,504.4 853.0,544.6 853.1,458.1 853.2,537.6 853.4,583.5 853.5,376.4 853.7,626.0 853.8,643.3 853.9,508.7 854.1,577.4 854.2,578.9 854.4,464.6 854.5,584.7 854.6,459.0 854.8,527.6 854.9,584.2 855.1,640.8 855.2,599.1 855.4,402.7 855.5,570.8 855.6,615.6 855.8,589.3 855.9,452.8 856.1,614.5 856.2,495.4 856.3,620.9 856.5,409.5 856.6,548.2 856.8,364.0 856.9,434.1 857.0,578.2 857.2,506.6 857.3,549.0 857.5,630.9 857.6,627.4 857.8,617.3 857.9,614.7 858.0,642.6 858.2,644.6 858.3,419.5 858.5,631.0 858.6,551.0 858.7,624.1 858.9,603.6 859.0,497.1 859.2,426.5 859.3,557.5 859.5,666.1 859.6,557.9 859.7,644.0 859.9,571.4 860.0,544.5 860.2,452.1 860.3,478.4 860.4,530.7 860.6,569.4 860.7,474.2 860.9,461.2 861.0,459.9 861.1,506.7 861.3,628.7 861.4,280.2 861.6,553.3 861.7,549.7 861.9,473.6 862.0,597.9 862.1,517.9 862.3,572.9 862.4,490.7 862.6,606.0 862.7,554.3 862.8,626.8 863.0,602.6 863.1,423.8 863.3,582.8 863.4,447.8 863.5,544.9 863.7,646.7 863.8,484.3 864.0,641.8 864.1,473.3 864.3,662.9 864.4,514.0 864.5,611.7 864.7,577.2 864.8,407.1 865.0,294.3 865.1,517.1 865.2,497.3 865.4,624.5 865.5,467.7 865.7,434.1 865.8,613.5 865.9,539.1 866.1,587.5 866.2,496.4 866.4,651.0 866.5,545.1 866.7,481.5 866.8,497.4 866.9,624.5 867.1,468.1 867.2,595.8 867.4,476.2 867.5,547.4 867.6,611.7 867.8,496.7 867.9,475.6 868.1,505.1 868.2,389.5 868.3,591.7 868.5,595.7 868.6,614.5 868.8,538.5 868.9,564.6 869.1,572.5 869.2,553.2 869.3,587.8 869.5,667.1 869.6,550.8 869.8,587.3 869.9,554.8 870.0,419.3 870.2,606.9 870.3,517.3 870.5,515.7 870.6,586.0 870.7,550.4 870.9,379.6 871.0,574.2 871.2,499.4 871.3,461.3 871.5,570.6 871.6,601.9 871.7,518.9 871.9,544.0 872.0,498.1 872.2,558.5 872.3,498.6 872.4,586.5 872.6,417.8 872.7,535.6 872.9,593.0 873.0,555.6 873.1,436.1 873.3,471.2 873.4,546.5 873.6,571.5 873.7,566.8 873.9,356.4 874.0,343.0 874.1,438.4 874.3,452.3 874.4,596.1 874.6,571.6 874.7,529.2 874.8,471.7 875.0,397.3 875.1,632.3 875.3,584.5 875.4,602.6 875.6,545.1 875.7,531.3 875.8,510.0 876.0,622.8 876.1,512.3 876.3,419.0 876.4,422.9 876.5,402.4 876.7,418.2 876.8,385.6 877.0,641.2 877.1,422.1 877.2,586.1 877.4,576.5 877.5,550.3 877.7,391.3 877.8,520.9 878.0,570.3 878.1,566.2 878.2,428.3 878.4,463.9 878.5,614.9 878.7,590.5 878.8,566.6 878.9,597.1 879.1,529.5 879.2,595.7 879.4,527.1 879.5,408.0 879.6,454.1 879.8,624.9 879.9,599.2 880.1,558.9 880.2,511.8 880.4,563.9 880.5,590.0 880.6,571.8 880.8,599.8 880.9,449.0 881.1,500.0 881.2,559.3 881.3,499.2 881.5,538.5 881.6,537.2 881.8,567.7 881.9,544.7 882.0,343.8 882.2,476.6 882.3,462.5 882.5,618.4 882.6,541.7 882.8,567.9 882.9,281.5 883.0,562.6 883.2,632.5 883.3,593.9 883.5,472.7 883.6,503.4 883.7,500.5 883.9,631.0 884.0,609.1 884.2,653.6 884.3,625.7 884.4,624.7 884.6,388.1 884.7,436.1 884.9,600.4 885.0,590.3 885.2,387.8 885.3,529.7 885.4,334.6 885.6,550.1 885.7,586.9 885.9,527.2 886.0,495.1 886.1,541.0 886.3,467.4 886.4,621.9 886.6,523.4 886.7,541.9 886.8,613.2 887.0,545.3 887.1,518.2 887.3,332.6 887.4,385.9 887.6,547.5 887.7,548.8 887.8,434.4 888.0,657.3 888.1,450.8 888.3,618.3 888.4,567.8 888.5,547.5 888.7,549.8 888.8,645.6 889.0,579.6 889.1,572.3 889.2,397.7 889.4,428.1 889.5,529.4 889.7,417.7 889.8,454.8 890.0,569.2 890.1,621.9 890.2,525.3 890.4,579.2 890.5,661.9 890.7,364.5 890.8,384.6 890.9,539.9 891.1,523.7 891.2,512.8 891.4,424.6 891.5,553.3 891.6,531.4 891.8,598.3 891.9,595.2 892.1,543.5 892.2,598.0 892.4,650.1 892.5,572.0 892.6,494.5 892.8,589.0 892.9,458.8 893.1,506.8 893.2,518.0 893.3,446.3 893.5,634.6 893.6,608.8 893.8,438.3 893.9,439.7 894.1,633.4 894.2,489.5 894.3,658.2 894.5,618.8 894.6,625.0 894.8,586.8 894.9,569.9 895.0,439.1 895.2,561.4 895.3,621.8 895.5,591.2 895.6,665.2 895.7,651.6 895.9,562.8 896.0,548.2 896.2,595.7 896.3,572.2 896.5,627.2 896.6,519.8 896.7,570.2 896.9,613.7 897.0,551.6 897.2,604.2 897.3,588.4 897.4,622.3 897.6,491.2 897.7,590.9 897.9,410.9 898.0,289.3 898.1,615.5 898.3,510.9 898.4,504.3 898.6,457.8 898.7,621.0 898.9,489.8 899.0,467.0 899.1,587.0 899.3,560.7 899.4,530.1 899.6,598.0 899.7,463.2 899.8,513.6 900.0,469.2 900.1,562.0 900.3,549.8 900.4,608.1 900.5,585.9 900.7,507.1 900.8,411.5 901.0,617.0 901.1,643.5 901.3,638.2 901.4,565.2 901.5,360.4 901.7,602.6 901.8,558.1 902.0,551.4 902.1,477.9 902.2,614.8 902.4,659.4 902.5,553.2 902.7,579.6 902.8,590.7 902.9,498.0 903.1,519.3 903.2,633.8 903.4,546.2 903.5,491.3 903.7,449.3 903.8,675.4 903.9,488.8 904.1,646.5 904.2,520.3 904.4,537.3 904.5,421.9 904.6,530.9 904.8,638.0 904.9,523.1 905.1,598.0 905.2,482.0 905.3,651.3 905.5,585.9 905.6,522.2 905.8,617.3 905.9,528.6 906.1,517.9 906.2,509.6 906.3,467.0 906.5,571.0 906.6,620.3 906.8,597.4 906.9,575.1 907.0,642.9 907.2,515.9 907.3,640.3 907.5,642.0 907.6,438.9 907.7,491.3 907.9,598.9 908.0,583.5 908.2,485.6 908.3,534.9 908.5,597.0 908.6,565.5 908.7,475.8 908.9,673.6 909.0,357.5 909.2,545.1 909.3,612.5 909.4,493.8 909.6,636.7 909.7,572.3 909.9,544.0 910.0,600.4 910.2,464.8 910.3,519.6 910.4,616.7 910.6,618.6 910.7,640.9 910.9,544.5 911.0,611.7 911.1,549.7 911.3,488.7 911.4,467.7 911.6,626.7 911.7,585.8 911.8,571.5 912.0,577.2 912.1,571.3 912.3,564.3 912.4,506.2 912.6,590.4 912.7,584.0 912.8,576.1 913.0,619.1 913.1,533.8 913.3,574.5 913.4,450.9 913.5,488.6 913.7,603.8 913.8,601.6 914.0,499.8 914.1,547.1 914.2,662.8 914.4,534.1 914.5,575.5 914.7,499.1 914.8,508.9 915.0,447.7 915.1,519.9 915.2,452.9 915.4,594.2 915.5,585.0 915.7,641.9 915.8,473.4 915.9,618.6 916.1,548.8 916.2,556.2 916.4,491.2 916.5,576.8 916.6,621.1 916.8,577.6 916.9,645.5 917.1,591.4 917.2,534.2 917.4,642.6 917.5,370.3 917.6,551.5 917.8,591.6 917.9,485.1 918.1,622.2 918.2,587.9 918.3,438.5 918.5,602.2 918.6,512.4 918.8,635.7 918.9,552.2 919.0,528.6 919.2,607.7 919.3,586.9 919.5,549.0 919.6,541.8 919.8,319.6 919.9,572.9 920.0,534.3 920.2,587.8 920.3,499.2 920.5,609.2 920.6,564.4 920.7,554.6 920.9,540.6 921.0,515.8 921.2,496.2 921.3,519.6 921.4,493.0 921.6,465.5 921.7,587.1 921.9,486.8 922.0,554.2 922.2,598.6 922.3,614.7 922.4,504.4 922.6,532.6 922.7,638.4 922.9,542.0 923.0,646.7 923.1,576.0 923.3,544.9 923.4,529.8 923.6,617.7 923.7,646.5 923.8,543.9 924.0,489.1 924.1,495.5 924.3,581.2 924.4,543.7 924.6,515.0 924.7,470.2 924.8,558.8 925.0,469.2 925.1,588.2 925.3,605.6 925.4,592.2 925.5,512.3 925.7,465.0 925.8,562.1 926.0,519.8 926.1,621.5 926.3,555.8 926.4,568.2 926.5,568.7 926.7,611.4 926.8,330.8 927.0,524.6 927.1,531.9 927.2,508.7 927.4,564.1 927.5,477.0 927.7,544.1 927.8,465.7 927.9,572.1 928.1,518.3 928.2,609.5 928.4,634.7 928.5,439.9 928.7,578.6 928.8,646.0 928.9,534.9 929.1,438.5 929.2,501.5 929.4,373.9 929.5,437.0 929.6,564.0 929.8,602.3 929.9,639.6 930.1,595.4 930.2,531.8 930.3,451.0 930.5,671.4 930.6,487.4 930.8,502.1 930.9,519.4 931.1,623.4 931.2,643.3 931.3,508.8 931.5,529.5 931.6,578.1 931.8,582.3 931.9,650.8 932.0,349.6 932.2,480.5 932.3,397.6 932.5,486.3 932.6,562.7 932.7,477.4 932.9,608.5 933.0,522.5 933.2,601.1 933.3,573.8 933.5,467.1 933.6,568.2 933.7,457.5 933.9,536.9 934.0,590.7 934.2,596.7 934.3,668.8 934.4,541.8 934.6,478.6 934.7,603.1 934.9,558.4 935.0,377.9 935.1,573.1 935.3,431.1 935.4,482.0 935.6,555.4 935.7,529.0 935.9,638.9 936.0,551.4 936.1,500.7 936.3,601.7 936.4,643.4 936.6,651.8 936.7,615.5 936.8,600.2 937.0,487.7 937.1,561.1 937.3,547.4 937.4,586.4 937.5,588.9 937.7,543.9 937.8,503.4 938.0,611.0 938.1,565.0 938.3,526.0 938.4,410.0 938.5,593.9 938.7,572.0 938.8,540.5 939.0,619.0 939.1,532.2 939.2,391.2 939.4,592.9 939.5,556.3 939.7,624.5 939.8,319.0 939.9,394.7 940.1,544.9 940.2,603.9 940.4,585.9 940.5,528.5 940.7,467.9 940.8,560.6 940.9,554.0 941.1,483.8 941.2,627.2 941.4,415.7 941.5,558.3 941.6,581.7 941.8,492.2 941.9,595.3 942.1,617.3 942.2,594.9 942.4,517.7 942.5,628.2 942.6,560.2 942.8,599.0 942.9,542.9 943.1,619.0 943.2,492.6 943.3,434.0 943.5,583.3 943.6,577.0 943.8,532.4 943.9,501.3 944.0,640.1 944.2,516.2 944.3,479.9 944.5,486.4 944.6,561.6 944.8,476.9 944.9,541.6 945.0,608.0 945.2,588.8 945.3,532.6 945.5,540.3 945.6,482.7 945.7,506.0 945.9,602.5 946.0,568.4 946.2,489.4 946.3,557.4 946.4,599.9 946.6,422.1 946.7,558.8 946.9,584.0 947.0,547.3 947.2,585.4 947.3,591.0 947.4,517.2 947.6,483.4 947.7,565.7 947.9,612.8 948.0,553.4 948.1,566.8 948.3,560.6 948.4,596.5 948.6,490.1 948.7,603.9 948.8,646.7 949.0,507.5 949.1,497.0 949.3,596.5 949.4,609.8 949.6,532.9 949.7,431.0 949.8,593.4 950.0,540.5 950.1,591.3 950.3,496.6 950.4,554.0 950.5,570.0 950.7,516.6 950.8,541.8 951.0,603.6 951.1,563.1 951.2,401.3 951.4,479.2 951.5,545.2 951.7,515.1 951.8,616.2 952.0,563.3 952.1,442.8 952.2,606.0 952.4,364.0 952.5,462.6 952.7,508.9 952.8,570.3 952.9,628.7 953.1,584.8 953.2,495.1 953.4,561.3 953.5,477.4 953.6,600.0 953.8,470.5 953.9,457.1 954.1,499.6 954.2,602.3 954.4,598.4 954.5,636.8 954.6,641.3 954.8,495.0 954.9,547.9 955.1,488.8 955.2,586.6 955.3,574.8 955.5,440.9 955.6,616.7 955.8,625.7 955.9,483.5 956.0,535.2 956.2,666.7 956.3,522.8 956.5,586.9 956.6,573.6 956.8,382.5 956.9,493.2 957.0,640.0 957.2,508.4 957.3,659.3 957.5,273.6 957.6,526.6 957.7,519.4 957.9,657.0 958.0,630.6 958.2,540.5 958.3,567.6 958.5,470.5 958.6,585.8 958.7,564.2 958.9,620.7 959.0,544.9 959.2,398.2 959.3,589.2 959.4,479.0 959.6,610.3 959.7,443.7 959.9,542.9 960.0,619.2 960.1,481.4 960.3,442.8 960.4,614.6 960.6,621.3 960.7,592.0 960.9,542.4 961.0,402.5 961.1,454.6 961.3,577.9 961.4,646.5 961.6,526.3 961.7,530.6 961.8,593.9 962.0,524.7 962.1,360.0 962.3,614.7 962.4,579.8 962.5,459.5 962.7,611.3 962.8,618.5 963.0,608.4 963.1,485.0 963.3,618.8 963.4,628.3 963.5,519.8 963.7,485.9 963.8,488.8 964.0,557.8 964.1,427.3 964.2,613.2 964.4,556.3 964.5,569.7 964.7,536.4 964.8,603.9 964.9,614.1 965.1,356.5 965.2,582.3 965.4,545.5 965.5,427.8 965.7,582.3 965.8,570.4 965.9,533.3 966.1,635.4 966.2,653.0 966.4,519.0 966.5,569.7 966.6,631.9 966.8,585.5 966.9,505.4 967.1,488.6 967.2,544.8 967.3,598.5 967.5,342.6 967.6,601.2 967.8,489.6 967.9,613.0 968.1,416.6 968.2,485.1 968.3,545.8 968.5,558.4 968.6,532.0 968.8,513.4 968.9,535.1 969.0,505.6 969.2,629.7 969.3,561.7 969.5,491.2 969.6,557.9 969.7,382.0 969.9,540.0 970.0,581.5 970.2,443.0 970.3,561.1 970.5,537.9 970.6,518.5 970.7,459.1 970.9,601.4 971.0,451.9 971.2,532.7 971.3,571.6 971.4,577.4 971.6,364.3 971.7,409.3 971.9,538.6 972.0,575.5 972.1,379.2 972.3,657.4 972.4,642.4 972.6,550.0 972.7,530.8 972.9,664.8 973.0,606.4 973.1,630.6 973.3,594.0 973.4,607.5 973.6,620.8 973.7,619.5 973.8,571.6 974.0,619.8 974.1,488.3 974.3,566.0 974.4,622.8 974.5,518.3 974.7,484.5 974.8,574.1 975.0,665.3 975.1,518.9 975.3,494.4 975.4,448.2 975.5,504.9 975.7,530.3 975.8,577.4 976.0,595.9 976.1,637.5 976.2,476.0 976.4,537.9 976.5,587.8 976.7,621.3 976.8,587.8 977.0,494.6 977.1,601.7 977.2,641.9 977.4,571.4 977.5,579.4 977.7,510.1 977.8,539.5 977.9,555.1 978.1,382.1 978.2,469.1 978.4,620.9 978.5,595.9 978.6,335.5 978.8,635.9 978.9,495.9 979.1,493.4 979.2,587.9 979.4,443.9 979.5,541.1 979.6,601.0 979.8,527.8 979.9,517.1 980.1,506.9 980.2,391.8 980.3,440.4 980.5,566.9 980.6,563.7 980.8,654.1 980.9,566.4 981.0,610.7 981.2,623.4 981.3,481.3 981.5,655.0 981.6,621.4 981.8,520.1 981.9,539.7 982.0,564.9 982.2,484.5 982.3,599.1 982.5,605.2 982.6,550.1 982.7,627.1 982.9,515.5 983.0,429.9 983.2,484.2 983.3,459.2 983.4,636.3 983.6,566.5 983.7,449.5 983.9,475.0 984.0,535.9 984.2,523.8 984.3,594.6 984.4,594.8 984.6,638.3 984.7,450.9 984.9,590.7 985.0,554.1 985.1,665.1 985.3,489.5 985.4,549.4 985.6,646.7 985.7,523.0 985.8,514.5 986.0,515.3 986.1,516.2 986.3,520.2 986.4,499.1 986.6,575.4 986.7,415.2 986.8,557.8 987.0,595.2 987.1,578.2 987.3,593.2 987.4,565.3 987.5,516.7 987.7,491.6 987.8,586.8 988.0,649.6 988.1,541.2 988.2,538.7 988.4,509.9 988.5,596.9 988.7,485.6 988.8,499.1 989.0,471.9 989.1,503.9 989.2,523.0 989.4,546.3 989.5,473.9 989.7,603.6 989.8,525.1 989.9,494.9 990.1,499.8 990.2,623.2 990.4,588.2 990.5,438.7 990.6,500.2 990.8,617.9 990.9,559.5 991.1,490.3 991.2,474.4 991.4,553.3 991.5,630.0 991.6,605.4 991.8,654.6 991.9,615.9 992.1,641.1 992.2,518.9 992.3,518.8 992.5,567.0 992.6,467.0 992.8,620.1 992.9,610.5 993.1,537.4 993.2,552.6 993.3,625.4 993.5,455.8 993.6,535.6 993.8,538.3 993.9,579.2 994.0,538.8 994.2,638.3 994.3,591.5 994.5,533.7 994.6,540.4 994.7,260.6 994.9,643.9 995.0,588.2 995.2,385.2 995.3,435.1 995.5,490.1 995.6,640.7 995.7,637.9 995.9,607.6 996.0,488.1 996.2,609.2 996.3,605.3 996.4,599.1 996.6,513.5 996.7,554.0 996.9,477.5 997.0,637.4 997.1,644.7 997.3,482.7 997.4,629.1 997.6,518.1 997.7,540.5 997.9,608.9 998.0,599.4 998.1,512.6 998.3,656.4 998.4,426.9 998.6,647.0 998.7,617.8 998.8,534.1 999.0,628.0 999.1,528.0 999.3,570.7 999.4,639.6 999.5,617.3 999.7,552.3 999.8,475.2 1000.0,600.3 1000.1,576.5 1000.3,547.7 1000.4,532.5 1000.5,517.3 1000.7,588.9 1000.8,581.3 1001.0,474.4 1001.1,460.4 1001.2,573.7 1001.4,472.5 1001.5,615.5 1001.7,491.8 1001.8,459.3 1001.9,548.9 1002.1,524.6 1002.2,642.3 1002.4,486.0 1002.5,526.5 1002.7,546.6 1002.8,546.2 1002.9,618.7 1003.1,484.7 1003.2,555.4 1003.4,541.4 1003.5,616.7 1003.6,537.7 1003.8,604.1 1003.9,509.1 1004.1,653.9 1004.2,626.2 1004.3,609.1 1004.5,577.0 1004.6,476.8 1004.8,665.8 1004.9,551.1 1005.1,650.6 1005.2,580.6 1005.3,594.0 1005.5,618.1 1005.6,564.2 1005.8,586.8 1005.9,600.2 1006.0,541.2 1006.2,603.3 1006.3,412.8 1006.5,602.4 1006.6,381.6 1006.7,618.7 1006.9,435.4 1007.0,641.8 1007.2,665.3 1007.3,632.6 1007.5,522.5 1007.6,605.5 1007.7,598.1 1007.9,529.6 1008.0,653.2 1008.2,554.3 1008.3,577.5 1008.4,618.8 1008.6,459.9 1008.7,584.1 1008.9,595.5 1009.0,525.5 1009.2,483.4 1009.3,606.4 1009.4,626.0 1009.6,427.2 1009.7,573.3 1009.9,555.4 1010.0,332.6 1010.1,492.5 1010.3,573.1 1010.4,511.6 1010.6,557.5 1010.7,637.2 1010.8,559.8 1011.0,483.6 1011.1,556.2 1011.3,579.0 1011.4,655.0 1011.6,524.3 1011.7,579.1 1011.8,590.4 1012.0,582.8 1012.1,575.0 1012.3,588.4 1012.4,595.7 1012.5,568.1 1012.7,647.0 1012.8,607.0 1013.0,571.8 1013.1,472.9 1013.2,573.4 1013.4,552.1 1013.5,469.2 1013.7,499.3 1013.8,522.2 1014.0,540.7 1014.1,545.0 1014.2,613.5 1014.4,624.4 1014.5,644.1 1014.7,633.8 1014.8,541.6 1014.9,542.8 1015.1,650.3 1015.2,489.8 1015.4,571.3 1015.5,555.2 1015.6,639.0 1015.8,483.0 1015.9,637.3 1016.1,609.7 1016.2,567.5 1016.4,562.1 1016.5,556.1 1016.6,447.0 1016.8,651.2 1016.9,529.8 1017.1,573.3 1017.2,497.7 1017.3,531.6 1017.5,497.6 1017.6,481.3 1017.8,506.3 1017.9,625.1 1018.0,555.4 1018.2,508.1 1018.3,507.8 1018.5,452.6 1018.6,575.5 1018.8,664.2 1018.9,519.0 1019.0,598.1 1019.2,533.9 1019.3,646.3 1019.5,585.3 1019.6,538.2 1019.7,626.4 1019.9,591.6 1020.0,622.4 1020.2,470.5 1020.3,507.8 1020.4,537.2 1020.6,355.0 1020.7,406.5 1020.9,601.4 1021.0,523.7 1021.2,635.6 1021.3,540.3 1021.4,612.6 1021.6,663.9 1021.7,462.0 1021.9,597.8 1022.0,378.0 1022.1,529.0 1022.3,530.8 1022.4,530.2 1022.6,370.3 1022.7,607.2 1022.8,385.8 1023.0,590.7 1023.1,633.6 1023.3,455.0 1023.4,632.9 1023.6,565.6 1023.7,490.8 1023.8,598.2 1024.0,520.3 1024.1,536.3 1024.3,526.5 1024.4,621.1 1024.5,523.9 1024.7,488.9 1024.8,623.0 1025.0,426.7 1025.1,434.7 1025.3,591.0 1025.4,431.6 1025.5,444.6 1025.7,628.3 1025.8,514.6 1026.0,424.8 1026.1,493.7 1026.2,624.8 1026.4,576.4 1026.5,550.3 1026.7,582.3 1026.8,580.0 1026.9,633.0 1027.1,665.6 1027.2,593.0 1027.4,573.8 1027.5,547.5 1027.7,431.1 1027.8,634.6 1027.9,586.1 1028.1,477.7 1028.2,492.6 1028.4,629.2 1028.5,529.0 1028.6,634.6 1028.8,438.6 1028.9,600.6 1029.1,542.3 1029.2,565.8 1029.3,558.8 1029.5,608.7 1029.6,584.0 1029.8,596.7 1029.9,540.4 1030.1,573.6 1030.2,544.8 1030.3,554.4 1030.5,530.6 1030.6,407.2 1030.8,554.9 1030.9,552.6 1031.0,540.5 1031.2,552.4 1031.3,575.2 1031.5,602.8 1031.6,554.2 1031.7,602.7 1031.9,531.5 1032.0,470.1 1032.2,499.0 1032.3,502.7 1032.5,608.5 1032.6,651.4 1032.7,610.2 1032.9,548.0 1033.0,626.0 1033.2,631.6 1033.3,558.6 1033.4,584.2 1033.6,641.3 1033.7,558.1 1033.9,523.2 1034.0,566.6 1034.1,624.5 1034.3,557.4 1034.4,639.6 1034.6,515.8 1034.7,441.2 1034.9,648.2 1035.0,547.5 1035.1,489.0 1035.3,534.4 1035.4,620.6 1035.6,639.8 1035.7,566.8 1035.8,645.9 1036.0,486.8 1036.1,556.7 1036.3,590.0 1036.4,505.4 1036.5,607.8 1036.7,557.0 1036.8,558.3 1037.0,630.4 1037.1,497.2 1037.3,522.0 1037.4,610.6 1037.5,570.8 1037.7,591.0 1037.8,441.0 1038.0,528.3 1038.1,435.9 1038.2,505.9 1038.4,499.4 1038.5,590.7 1038.7,481.9 1038.8,586.6 1038.9,488.9 1039.1,519.1 1039.2,557.2 1039.4,615.9 1039.5,540.9 1039.7,536.4 1039.8,524.1 1039.9,640.1 1040.1,601.0 1040.2,548.0 1040.4,480.0 1040.5,604.0 1040.6,462.2 1040.8,403.0 1040.9,633.8 1041.1,515.3 1041.2,575.7 1041.3,622.4 1041.5,605.7 1041.6,581.7 1041.8,658.2 1041.9,521.6 1042.1,566.2 1042.2,584.2 1042.3,473.9 1042.5,413.8 1042.6,565.3 1042.8,590.0 1042.9,539.7 1043.0,574.1 1043.2,463.8 1043.3,593.8 1043.5,624.3 1043.6,659.7 1043.8,615.4 1043.9,632.2 1044.0,454.5 1044.2,524.3 1044.3,543.6 1044.5,433.2 1044.6,536.6 1044.7,518.6 1044.9,617.8 1045.0,593.8 1045.2,536.6 1045.3,484.3 1045.4,594.7 1045.6,565.7 1045.7,594.7 1045.9,593.4 1046.0,307.0 1046.2,449.5 1046.3,399.6 1046.4,546.1 1046.6,654.9 1046.7,595.6 1046.9,528.9 1047.0,446.1 1047.1,620.2 1047.3,486.4 1047.4,468.2 1047.6,633.3 1047.7,456.8 1047.8,540.5 1048.0,480.5 1048.1,525.1 1048.3,524.1 1048.4,470.0 1048.6,504.7 1048.7,573.1 1048.8,577.5 1049.0,293.0 1049.1,597.7 1049.3,578.4 1049.4,620.7 1049.5,584.8 1049.7,542.6 1049.8,610.6 1050.0,570.2 1050.1,538.0 1050.2,577.0 1050.4,506.7 1050.5,554.9 1050.7,587.2 1050.8,514.0 1051.0,548.1 1051.1,565.9 1051.2,617.1 1051.4,377.9 1051.5,614.5 1051.7,577.2 1051.8,542.4 1051.9,440.8 1052.1,591.3 1052.2,627.2 1052.4,518.2 1052.5,427.8 1052.6,565.9 1052.8,660.1 1052.9,587.8 1053.1,467.9 1053.2,671.9 1053.4,524.2 1053.5,466.1 1053.6,595.1 1053.8,480.4 1053.9,540.1 1054.1,588.2 1054.2,647.3 1054.3,528.0 1054.5,579.0 1054.6,550.3 1054.8,609.9 1054.9,657.4 1055.0,631.6 1055.2,532.3 1055.3,624.5 1055.5,592.3 1055.6,541.8 1055.8,596.5 1055.9,562.8 1056.0,573.0 1056.2,502.0 1056.3,574.6 1056.5,594.9 1056.6,382.0 1056.7,615.1 1056.9,532.8 1057.0,536.1 1057.2,583.7 1057.3,510.7 1057.4,508.3 1057.6,562.6 1057.7,588.2 1057.9,627.9 1058.0,473.7 1058.2,387.7 1058.3,595.6 1058.4,588.9 1058.6,532.2 1058.7,502.4 1058.9,482.8 1059.0,505.3 1059.1,525.4 1059.3,537.0 1059.4,660.3 1059.6,560.7 1059.7,519.5 1059.9,592.1 1060.0,601.7 1060.1,573.8 1060.3,551.5 1060.4,662.5 1060.6,509.9 1060.7,519.9 1060.8,605.8 1061.0,601.6 1061.1,615.3 1061.3,574.2 1061.4,423.4 1061.5,577.7 1061.7,449.0 1061.8,614.1 1062.0,603.4 1062.1,558.5 1062.3,620.2 1062.4,628.4 1062.5,528.7 1062.7,586.0 1062.8,522.8 1063.0,605.7 1063.1,593.2 1063.2,466.6 1063.4,546.2 1063.5,626.4 1063.7,573.3 1063.8,631.7 1063.9,359.0 1064.1,549.2 1064.2,629.0 1064.4,608.3 1064.5,638.8 1064.7,629.1 1064.8,569.0 1064.9,617.6 1065.1,591.1 1065.2,571.3 1065.4,612.2 1065.5,624.0 1065.6,621.3 1065.8,441.4 1065.9,585.7 1066.1,568.2 1066.2,511.9 1066.3,503.3 1066.5,524.8 1066.6,468.8 1066.8,555.5 1066.9,617.9 1067.1,541.4 1067.2,569.0 1067.3,491.7 1067.5,603.8 1067.6,529.0 1067.8,663.4 1067.9,580.5 1068.0,586.5 1068.2,633.5 1068.3,494.7 1068.5,493.0 1068.6,602.7 1068.7,522.2 1068.9,465.3 1069.0,547.9 1069.2,583.1 1069.3,528.6 1069.5,578.8 1069.6,549.5 1069.7,532.9 1069.9,595.7 1070.0,532.8 1070.2,560.6 1070.3,545.9 1070.4,596.4 1070.6,515.2 1070.7,621.7 1070.9,565.3 1071.0,556.8 1071.1,664.8 1071.3,502.6 1071.4,553.0 1071.6,637.8 1071.7,487.3 1071.9,523.6 1072.0,460.6 1072.1,529.5 1072.3,561.8 1072.4,504.8 1072.6,585.4 1072.7,573.0 1072.8,585.9 1073.0,590.8 1073.1,443.7 1073.3,561.6 1073.4,561.4 1073.5,582.4 1073.7,590.6 1073.8,606.8 1074.0,439.8 1074.1,519.3 1074.3,566.0 1074.4,546.2 1074.5,491.6 1074.7,583.9 1074.8,598.3 1075.0,566.7 1075.1,569.5 1075.2,494.3 1075.4,471.4 1075.5,485.2 1075.7,528.0 1075.8,558.5 1076.0,617.3 1076.1,452.9 1076.2,487.1 1076.4,558.9 1076.5,515.0 1076.7,469.8 1076.8,594.8 1076.9,550.9 1077.1,432.6 1077.2,608.5 1077.4,622.2 1077.5,441.0 1077.6,479.7 1077.8,648.5 1077.9,550.0 1078.1,538.1 1078.2,523.8 1078.4,543.6 1078.5,553.1 1078.6,545.2 1078.8,543.0 1078.9,634.9 1079.1,617.7 1079.2,598.1 1079.3,456.0 1079.5,569.1 1079.6,544.3 1079.8,423.7 1079.9,633.0 1080.0,614.3 1080.2,599.0 1080.3,461.1 1080.5,524.0 1080.6,626.4 1080.8,640.4 1080.9,618.6 1081.0,463.1 1081.2,576.7 1081.3,482.9 1081.5,490.9 1081.6,426.5 1081.7,557.0 1081.9,600.5 1082.0,561.7 1082.2,473.8 1082.3,443.4 1082.4,580.5 1082.6,566.2 1082.7,505.4 1082.9,580.7 1083.0,606.2 1083.2,599.6 1083.3,567.4 1083.4,606.5 1083.6,513.9 1083.7,534.9 1083.9,454.2 1084.0,518.2 1084.1,571.8 1084.3,616.4 1084.4,607.1 1084.6,477.0 1084.7,541.0 1084.8,631.8 1085.0,564.4 1085.1,513.8 1085.3,504.0 1085.4,493.9 1085.6,466.4 1085.7,567.3 1085.8,535.1 1086.0,640.0 1086.1,536.3 1086.3,562.1 1086.4,611.0 1086.5,604.2 1086.7,527.1 1086.8,608.8 1087.0,589.6 1087.1,584.2 1087.2,515.3 1087.4,614.7 1087.5,638.5 1087.7,616.4 1087.8,526.2 1088.0,646.6 1088.1,555.7 1088.2,564.0 1088.4,584.7 1088.5,589.0 1088.7,558.4 1088.8,643.5 1088.9,592.9 1089.1,578.1 1089.2,624.6 1089.4,560.8 1089.5,595.1 1089.6,642.2 1089.8,627.3 1089.9,592.2 1090.1,536.7 1090.2,505.9 1090.4,567.1 1090.5,647.8 1090.6,546.8 1090.8,470.0 1090.9,646.3 1091.1,589.1 1091.2,659.8 1091.3,552.1 1091.5,632.6 1091.6,450.3 1091.8,579.8 1091.9,544.4 1092.1,592.2 1092.2,591.1 1092.3,662.9 1092.5,485.9 1092.6,601.8 1092.8,605.3 1092.9,587.3 1093.0,616.6 1093.2,594.9 1093.3,599.9 1093.5,418.5 1093.6,482.5 1093.7,599.8 1093.9,495.2 1094.0,650.8 1094.2,553.9 1094.3,487.3 1094.5,610.8 1094.6,621.0 1094.7,508.1 1094.9,538.8 1095.0,420.0 1095.2,621.4 1095.3,623.4 1095.4,645.3 1095.6,593.1 1095.7,647.6 1095.9,546.1 1096.0,637.1 1096.1,572.7 1096.3,563.0 1096.4,637.0 1096.6,531.5 1096.7,387.1 1096.9,583.0 1097.0,562.8 1097.1,585.2 1097.3,411.9 1097.4,492.2 1097.6,427.3 1097.7,583.5 1097.8,594.6 1098.0,660.3 1098.1,639.4 1098.3,439.8 1098.4,551.6 1098.5,574.2 1098.7,621.8 1098.8,453.6 1099.0,650.5 1099.1,540.2 1099.3,549.2 1099.4,523.6 1099.5,520.9 1099.7,323.7 1099.8,557.0 1100.0,576.3 1100.1,506.8 1100.2,626.8 1100.4,600.2 1100.5,512.1 1100.7,478.7 1100.8,537.9 1100.9,647.1 1101.1,499.0 1101.2,428.5 1101.4,572.2 1101.5,583.2 1101.7,589.2 1101.8,548.1 1101.9,619.7 1102.1,626.5 1102.2,387.6 1102.4,565.9 1102.5,563.7 1102.6,597.3 1102.8,648.8 1102.9,642.9 1103.1,644.5 1103.2,530.1 1103.3,513.0 1103.5,445.2 1103.6,412.1 1103.8,623.3 1103.9,660.9 1104.1,534.0 1104.2,598.9 1104.3,463.9 1104.5,568.3 1104.6,576.1 1104.8,578.8 1104.9,596.6 1105.0,555.9 1105.2,617.1 1105.3,418.2 1105.5,506.5 1105.6,492.7 1105.7,449.8 1105.9,534.6 1106.0,474.4 1106.2,523.1 1106.3,570.6 1106.5,658.0 1106.6,564.1 1106.7,560.2 1106.9,523.7 1107.0,487.7 1107.2,545.0 1107.3,637.2 1107.4,636.2 1107.6,487.1 1107.7,483.4 1107.9,582.3 1108.0,642.0 1108.1,632.6 1108.3,631.1 1108.4,469.4 1108.6,581.5 1108.7,572.6 1108.9,503.8 1109.0,607.3 1109.1,561.6 1109.3,554.1 1109.4,580.2 1109.6,629.8 1109.7,578.9 1109.8,631.7 1110.0,595.5 1110.1,582.6 1110.3,616.5 1110.4,523.0 1110.6,534.0 1110.7,460.5 1110.8,460.2 1111.0,600.4 1111.1,625.0 1111.3,387.5 1111.4,565.6 1111.5,536.7 1111.7,489.6 1111.8,592.1 1112.0,552.1 1112.1,598.6 1112.2,612.3 1112.4,652.7 1112.5,608.9 1112.7,606.6 1112.8,522.4 1113.0,564.8 1113.1,516.5 1113.2,600.7 1113.4,612.8 1113.5,554.8 1113.7,603.2 1113.8,521.2 1113.9,585.9 1114.1,601.7 1114.2,521.3 1114.4,617.1 1114.5,527.6 1114.6,584.8 1114.8,638.1 1114.9,546.4 1115.1,549.7 1115.2,634.7 1115.4,574.0 1115.5,573.6 1115.6,529.7 1115.8,615.8 1115.9,558.2 1116.1,387.0 1116.2,660.9 1116.3,529.7 1116.5,591.1 1116.6,570.3 1116.8,601.7 1116.9,574.2 1117.0,568.7 1117.2,468.6 1117.3,488.6 1117.5,463.0 1117.6,434.0 1117.8,584.4 1117.9,515.7 1118.0,482.5 1118.2,631.1 1118.3,528.1 1118.5,555.8 1118.6,615.7 1118.7,546.4 1118.9,535.9 1119.0,542.5 1119.2,667.2 1119.3,466.7 1119.4,591.2 1119.6,510.8 1119.7,345.6 1119.9,551.8 1120.0,645.4 1120.2,559.4 1120.3,543.8 1120.4,585.9 1120.6,530.2 1120.7,572.6 1120.9,645.9 1121.0,651.3 1121.1,647.6 1121.3,593.3 1121.4,465.2 1121.6,594.9 1121.7,507.8 1121.8,544.7 1122.0,533.6 1122.1,542.7 1122.3,615.5 1122.4,490.4 1122.6,581.4 1122.7,461.9 1122.8,661.0 1123.0,631.8 1123.1,627.9 1123.3,528.9 1123.4,633.6 1123.5,579.5 1123.7,566.9 1123.8,566.8 1124.0,600.5 1124.1,487.2 1124.2,576.4 1124.4,620.3 1124.5,559.9 1124.7,632.4 1124.8,540.6 1125.0,620.7 1125.1,484.1 1125.2,640.3 1125.4,598.3 1125.5,613.4 1125.7,558.1 1125.8,583.8 1125.9,576.7 1126.1,577.4 1126.2,551.1 1126.4,605.9 1126.5,596.5 1126.7,606.5 1126.8,626.1 1126.9,549.1 1127.1,463.7 1127.2,477.0 1127.4,440.1 1127.5,633.1 1127.6,531.9 1127.8,641.3 1127.9,509.1 1128.1,500.9 1128.2,572.8 1128.3,407.6 1128.5,575.3 1128.6,563.2 1128.8,594.3 1128.9,508.4 1129.1,559.6 1129.2,569.6 1129.3,581.2 1129.5,524.5 1129.6,642.0 1129.8,548.1 1129.9,641.8 1130.0,613.5 1130.2,653.7 1130.3,566.8 1130.5,458.5 1130.6,614.2 1130.7,632.7 1130.9,565.8 1131.0,658.7 1131.2,592.6 1131.3,578.4 1131.5,640.8 1131.6,487.0 1131.7,587.6 1131.9,556.1 1132.0,632.8 1132.2,437.9 1132.3,619.7 1132.4,575.3 1132.6,638.2 1132.7,624.1 1132.9,628.2 1133.0,587.5 1133.1,638.4 1133.3,575.3 1133.4,559.9 1133.6,618.2 1133.7,521.9 1133.9,641.2 1134.0,558.4 1134.1,511.6 1134.3,551.8 1134.4,668.8 1134.6,641.5 1134.7,649.5 1134.8,629.6 1135.0,566.3 1135.1,447.4 1135.3,590.2 1135.4,517.2 1135.5,605.3 1135.7,433.6 1135.8,588.1 1136.0,617.5 1136.1,618.2 1136.3,632.7 1136.4,640.0 1136.5,469.8 1136.7,531.8 1136.8,626.5 1137.0,554.1 1137.1,576.0 1137.2,642.3 1137.4,408.0 1137.5,610.7 1137.7,558.9 1137.8,591.6 1137.9,572.5 1138.1,399.5 1138.2,522.9 1138.4,610.4 1138.5,535.9 1138.7,576.0 1138.8,610.5 1138.9,561.5 1139.1,611.2 1139.2,511.6 1139.4,601.7 1139.5,636.1 1139.6,496.7 1139.8,622.2 1139.9,535.1 1140.1,494.7 1140.2,531.3 1140.3,455.7 1140.5,605.4 1140.6,589.8 1140.8,548.7 1140.9,632.1 1141.1,407.2 1141.2,544.3 1141.3,540.7 1141.5,557.4 1141.6,570.0 1141.8,617.8 1141.9,634.6 1142.0,608.0 1142.2,655.7 1142.3,550.8 1142.5,620.2 1142.6,473.3 1142.8,633.8 1142.9,597.8 1143.0,498.1 1143.2,551.2 1143.3,583.8 1143.5,530.5 1143.6,585.7 1143.7,624.6 1143.9,424.6 1144.0,493.7 1144.2,529.2 1144.3,603.9 1144.4,569.7 1144.6,638.6 1144.7,652.1 1144.9,458.6 1145.0,583.2 1145.2,613.8 1145.3,517.7 1145.4,566.8 1145.6,544.1 1145.7,634.1 1145.9,579.1 1146.0,584.7 1146.1,601.8 1146.3,620.7 1146.4,493.2 1146.6,528.3 1146.7,560.8 1146.8,605.1 1147.0,549.0 1147.1,584.2 1147.3,671.6 1147.4,551.0 1147.6,543.3 1147.7,445.4 1147.8,508.0 1148.0,640.7 1148.1,598.4 1148.3,650.3 1148.4,643.4 1148.5,576.1 1148.7,615.4 1148.8,645.3 1149.0,550.1 1149.1,473.0 1149.2,508.2 1149.4,647.3 1149.5,601.2 1149.7,652.2 1149.8,582.7 1150.0,465.1 1150.1,618.1 1150.2,530.6 1150.4,571.4 1150.5,567.6 1150.7,505.9 1150.8,599.1 1150.9,597.0 1151.1,529.0 1151.2,627.5 1151.4,634.2 1151.5,584.2 1151.6,586.7 1151.8,600.4 1151.9,608.0 1152.1,490.5 1152.2,584.3 1152.4,599.4 1152.5,517.9 1152.6,501.9 1152.8,536.4 1152.9,443.2 1153.1,630.9 1153.2,578.5 1153.3,511.7 1153.5,432.0 1153.6,617.1 1153.8,527.6 1153.9,614.8 1154.0,586.0 1154.2,526.0 1154.3,521.7 1154.5,646.2 1154.6,607.6 1154.8,444.1 1154.9,559.6 1155.0,558.0 1155.2,607.6 1155.3,577.9 1155.5,605.1 1155.6,628.0 1155.7,603.0 1155.9,561.3 1156.0,566.7 1156.2,566.6 1156.3,593.9 1156.4,580.1 1156.6,492.4 1156.7,473.0 1156.9,483.3 1157.0,610.8 1157.2,548.3 1157.3,522.0 1157.4,596.3 1157.6,573.8 1157.7,498.2 1157.9,535.6 1158.0,530.9 1158.1,640.3 1158.3,647.4 1158.4,538.2 1158.6,558.7 1158.7,621.6 1158.9,668.9 1159.0,610.7 1159.1,550.2 1159.3,591.0 1159.4,545.3 1159.6,624.9 1159.7,545.6 1159.8,633.0 1160.0,483.6 1160.1,607.3 1160.3,668.7 1160.4,513.6 1160.5,597.2 1160.7,583.8 1160.8,626.5 1161.0,615.9 1161.1,585.4 1161.3,601.7 1161.4,569.1 1161.5,605.5 1161.7,579.6 1161.8,655.2 1162.0,569.4 1162.1,553.7 1162.2,482.1 1162.4,532.6 1162.5,640.4 1162.7,590.4 1162.8,523.3 1162.9,532.0 1163.1,647.1 1163.2,655.5 1163.4,570.5 1163.5,577.8 1163.7,627.7 1163.8,605.7 1163.9,592.6 1164.1,516.6 1164.2,606.5 1164.4,511.9 1164.5,502.2 1164.6,608.5 1164.8,498.3 1164.9,639.9 1165.1,587.6 1165.2,635.5 1165.3,596.5 1165.5,602.7 1165.6,522.5 1165.8,504.4 1165.9,594.9 1166.1,594.0 1166.2,440.6 1166.3,622.9 1166.5,573.7 1166.6,554.7 1166.8,543.2 1166.9,624.5 1167.0,597.4 1167.2,625.5 1167.3,523.2 1167.5,529.6 1167.6,507.1 1167.7,580.3 1167.9,659.5 1168.0,480.8 1168.2,634.1 1168.3,349.0 1168.5,654.5 1168.6,585.4 1168.7,536.1 1168.9,466.4 1169.0,561.7 1169.2,638.2 1169.3,486.8 1169.4,635.6 1169.6,615.4 1169.7,612.6 1169.9,486.0 1170.0,583.1 1170.1,500.5 1170.3,560.2 1170.4,572.7 1170.6,515.8 1170.7,614.1 1170.9,604.2 1171.0,475.0 1171.1,552.3 1171.3,587.4 1171.4,547.9 1171.6,524.5 1171.7,532.3 1171.8,568.2 1172.0,548.8 1172.1,609.8 1172.3,571.9 1172.4,486.9 1172.5,473.5 1172.7,658.1 1172.8,606.9 1173.0,605.7 1173.1,595.4 1173.3,599.1 1173.4,602.6 1173.5,573.1 1173.7,609.0 1173.8,528.3 1174.0,655.1 1174.1,441.0 1174.2,617.9 1174.4,482.1 1174.5,538.5 1174.7,486.2 1174.8,579.0 1175.0,595.9 1175.1,550.9 1175.2,616.6 1175.4,581.0 1175.5,562.2 1175.7,630.1 1175.8,511.6 1175.9,575.3 1176.1,563.8 1176.2,538.4 1176.4,480.2 1176.5,627.2 1176.6,617.2 1176.8,630.0 1176.9,440.6 1177.1,579.4 1177.2,530.6 1177.4,621.7 1177.5,465.7 1177.6,629.6 1177.8,539.0 1177.9,655.9 1178.1,492.9 1178.2,585.9 1178.3,547.6 1178.5,552.5 1178.6,615.3 1178.8,575.7 1178.9,670.9 1179.0,515.9 1179.2,575.6 1179.3,602.9 1179.5,585.0 1179.6,582.8 1179.8,622.9 1179.9,589.2 1180.0,538.6 1180.2,559.1 1180.3,389.8 1180.5,523.8 1180.6,503.9 1180.7,625.3 1180.9,565.4 1181.0,608.2 1181.2,609.1 1181.3,594.8 1181.4,557.4 1181.6,581.7 1181.7,584.2 1181.9,589.2 1182.0,406.2 1182.2,580.5 1182.3,470.3 1182.4,386.3 1182.6,548.6 1182.7,423.6 1182.9,541.3 1183.0,507.5 1183.1,530.8 1183.3,612.0 1183.4,618.5 1183.6,646.9 1183.7,612.7 1183.8,564.0 1184.0,578.2 1184.1,522.3 1184.3,599.1 1184.4,548.6 1184.6,589.8 1184.7,612.0 1184.8,517.3 1185.0,600.4 1185.1,565.4 1185.3,607.0 1185.4,543.6 1185.5,620.1 1185.7,644.1 1185.8,547.4 1186.0,569.3 1186.1,543.1 1186.2,640.1 1186.4,516.9 1186.5,648.3 1186.7,445.7 1186.8,458.3 1187.0,370.0 1187.1,597.2 1187.2,544.0 1187.4,390.3 1187.5,530.3 1187.7,541.3 1187.8,654.5 1187.9,652.2 1188.1,547.1 1188.2,573.8 1188.4,569.9 1188.5,617.0 1188.6,598.4 1188.8,482.9 1188.9,589.1 1189.1,431.1 1189.2,621.4 1189.4,563.3 1189.5,545.3 1189.6,536.4 1189.8,509.8 1189.9,521.8 1190.1,506.4 1190.2,645.1 1190.3,639.4 1190.5,627.9 1190.6,615.9 1190.8,530.0 1190.9,562.3 1191.0,532.3 1191.2,552.1 1191.3,558.7 1191.5,618.0 1191.6,493.6 1191.8,517.9 1191.9,521.8 1192.0,462.7 1192.2,584.5 1192.3,580.4 1192.5,572.8 1192.6,591.5 1192.7,566.6 1192.9,547.4 1193.0,554.1 1193.2,619.7 1193.3,528.5 1193.5,641.9 1193.6,614.3 1193.7,584.3 1193.9,503.9 1194.0,606.8 1194.2,503.7 1194.3,555.3 1194.4,533.8 1194.6,599.7 1194.7,430.8 1194.9,543.0 1195.0,639.5 1195.1,509.5 1195.3,573.4 1195.4,501.6 1195.6,533.5 1195.7,436.3 1195.9,474.5 1196.0,344.4 1196.1,519.6 1196.3,644.8 1196.4,512.5 1196.6,526.4 1196.7,455.5 1196.8,522.0 1197.0,549.1 1197.1,516.6 1197.3,551.6 1197.4,571.0 1197.5,418.6 1197.7,569.2 1197.8,634.7 1198.0,649.1 1198.1,588.5 1198.3,575.1 1198.4,559.3 1198.5,642.2 1198.7,560.3 1198.8,443.7 1199.0,522.8 1199.1,533.0 1199.2,566.0 1199.4,485.0 1199.5,637.0 1199.7,516.9 1199.8,531.0 1199.9,587.1 1200.1,569.9 1200.2,624.2 1200.4,667.0 1200.5,593.6 1200.7,593.3 1200.8,565.1 1200.9,592.1 1201.1,483.1 1201.2,625.7 1201.4,504.8 1201.5,561.3 1201.6,611.9 1201.8,488.2 1201.9,559.9 1202.1,635.7 1202.2,491.6 1202.3,603.6 1202.5,556.9 1202.6,537.9 1202.8,524.6 1202.9,530.4 1203.1,502.7 1203.2,518.6 1203.3,617.5 1203.5,559.3 1203.6,569.4 1203.8,627.9 1203.9,578.8 1204.0,517.1 1204.2,577.0 1204.3,585.1 1204.5,572.1 1204.6,558.0 1204.7,519.9 1204.9,496.1 1205.0,601.0 1205.2,605.0 1205.3,596.8 1205.5,492.2 1205.6,478.6 1205.7,592.8 1205.9,502.2 1206.0,561.4 1206.2,444.6 1206.3,557.2 1206.4,477.1 1206.6,559.8 1206.7,591.7 1206.9,497.5 1207.0,593.5 1207.1,514.3 1207.3,563.6 1207.4,595.6 1207.6,572.2 1207.7,476.3 1207.9,599.7 1208.0,638.1 1208.1,477.3 1208.3,631.1 1208.4,610.4 1208.6,571.7 1208.7,516.5 1208.8,422.7 1209.0,617.9 1209.1,610.2 1209.3,515.8 1209.4,558.5 1209.6,493.5 1209.7,589.2 1209.8,600.9 1210.0,488.9 1210.1,614.5 1210.3,604.8 1210.4,588.8 1210.5,593.9 1210.7,621.6 1210.8,601.0 1211.0,620.4 1211.1,563.4 1211.2,535.1 1211.4,566.1 1211.5,642.0 1211.7,554.0 1211.8,531.4 1212.0,344.0 1212.1,571.1 1212.2,431.9 1212.4,504.3 1212.5,575.5 1212.7,605.9 1212.8,622.8 1212.9,649.1 1213.1,609.9 1213.2,570.5 1213.4,568.9 1213.5,620.5 1213.6,575.8 1213.8,577.8 1213.9,509.3 1214.1,469.2 1214.2,445.5 1214.4,570.7 1214.5,497.3 1214.6,548.9 1214.8,634.6 1214.9,641.5 1215.1,551.6 1215.2,537.7 1215.3,543.4 1215.5,571.2 1215.6,553.7 1215.8,541.3 1215.9,533.5 1216.0,625.9 1216.2,572.5 1216.3,594.6 1216.5,571.3 1216.6,585.1 1216.8,641.5 1216.9,514.4 1217.0,565.3 1217.2,489.4 1217.3,650.0 1217.5,635.9 1217.6,629.5 1217.7,491.0 1217.9,567.7 1218.0,523.7 1218.2,640.4 1218.3,524.7 1218.4,351.5 1218.6,474.9 1218.7,566.9 1218.9,444.0 1219.0,546.5 1219.2,552.3 1219.3,621.7 1219.4,547.0 1219.6,523.0 1219.7,550.8 1219.9,536.5 1220.0,486.0 1220.1,535.0 1220.3,545.2 1220.4,564.5 1220.6,575.8 1220.7,531.8 1220.8,504.5 1221.0,528.6 1221.1,635.1 1221.3,606.5 1221.4,550.3 1221.6,558.1 1221.7,471.5 1221.8,413.7 1222.0,481.5 1222.1,551.7 1222.3,530.5 1222.4,498.4 1222.5,625.6 1222.7,597.6 1222.8,656.7 1223.0,548.6 1223.1,470.7 1223.2,668.4 1223.4,629.5 1223.5,615.9 1223.7,517.3 1223.8,588.9 1224.0,616.2 1224.1,588.5 1224.2,606.5 1224.4,607.5 1224.5,558.5 1224.7,540.2 1224.8,607.7 1224.9,561.1 1225.1,654.8 1225.2,430.8 1225.4,634.6 1225.5,559.6 1225.7,605.0 1225.8,596.3 1225.9,601.7 1226.1,526.7 1226.2,574.4 1226.4,604.9 1226.5,557.4 1226.6,505.0 1226.8,540.6 1226.9,609.2 1227.1,540.8 1227.2,465.3 1227.3,616.4 1227.5,543.8 1227.6,569.2 1227.8,541.7 1227.9,627.3 1228.1,610.4 1228.2,592.4 1228.3,501.5 1228.5,586.8 1228.6,594.0 1228.8,526.1 1228.9,627.2 1229.0,596.7 1229.2,561.1 1229.3,592.6 1229.5,553.3 1229.6,552.7 1229.7,626.7 1229.9,628.2 1230.0,516.4 1230.2,581.9 1230.3,625.2 1230.5,640.8 1230.6,581.6 1230.7,500.8 1230.9,615.1 1231.0,378.2 1231.2,658.5 1231.3,554.1 1231.4,535.0 1231.6,564.1 1231.7,606.2 1231.9,597.3 1232.0,560.7 1232.1,482.2 1232.3,581.6 1232.4,592.9 1232.6,584.5 1232.7,560.1 1232.9,605.1 1233.0,621.1 1233.1,483.3 1233.3,629.9 1233.4,501.8 1233.6,548.8 1233.7,446.3 1233.8,597.1 1234.0,496.8 1234.1,638.1 1234.3,517.1 1234.4,595.7 1234.5,575.4 1234.7,513.5 1234.8,547.1 1235.0,358.0 1235.1,601.0 1235.3,523.4 1235.4,574.6 1235.5,608.7 1235.7,585.9 1235.8,513.8 1236.0,645.5 1236.1,596.5 1236.2,529.5 1236.4,551.1 1236.5,578.7 1236.7,624.0 1236.8,648.8 1236.9,584.5 1237.1,537.4 1237.2,605.0 1237.4,479.7 1237.5,549.9 1237.7,576.3 1237.8,523.7 1237.9,600.0 1238.1,483.2 1238.2,589.6 1238.4,668.0 1238.5,423.3 1238.6,570.1 1238.8,479.1 1238.9,633.4 1239.1,375.0 1239.2,572.0 1239.3,482.6 1239.5,637.1 1239.6,563.4 1239.8,523.0 1239.9,586.2 1240.1,577.9 1240.2,463.9 1240.3,563.7 1240.5,537.2 1240.6,540.4 1240.8,482.0 1240.9,593.7 1241.0,562.1 1241.2,613.9 1241.3,595.0 1241.5,507.3 1241.6,441.5 1241.8,595.7 1241.9,522.3 1242.0,563.7 1242.2,536.7 1242.3,589.9 1242.5,591.9 1242.6,615.2 1242.7,569.4 1242.9,646.4 1243.0,495.7 1243.2,608.9 1243.3,547.6 1243.4,568.7 1243.6,592.8 1243.7,457.7 1243.9,499.4 1244.0,528.2 1244.2,631.5 1244.3,575.4 1244.4,544.6 1244.6,636.4 1244.7,536.2 1244.9,508.9 1245.0,454.0 1245.1,569.4 1245.3,655.3 1245.4,614.9 1245.6,511.9 1245.7,625.6 1245.8,549.8 1246.0,544.3 1246.1,578.2 1246.3,517.0 1246.4,630.6 1246.6,550.2 1246.7,587.9 1246.8,496.9 1247.0,585.5 1247.1,618.2 1247.3,593.4 1247.4,565.8 1247.5,640.0 1247.7,494.9 1247.8,544.7 1248.0,375.0 1248.1,552.3 1248.2,415.1 1248.4,553.2 1248.5,584.1 1248.7,539.2 1248.8,523.8 1249.0,538.2 1249.1,614.5 1249.2,658.6 1249.4,597.6 1249.5,579.8 1249.7,505.0 1249.8,638.1 1249.9,501.4 1250.1,645.4 1250.2,598.1 1250.4,584.5 1250.5,465.8 1250.6,454.5 1250.8,651.1 1250.9,617.1 1251.1,577.8 1251.2,604.6 1251.4,451.3 1251.5,551.7 1251.6,596.2 1251.8,553.8 1251.9,540.6 1252.1,497.5 1252.2,486.5 1252.3,581.9 1252.5,523.5 1252.6,431.4 1252.8,564.6 1252.9,529.4 1253.0,571.7 1253.2,587.8 1253.3,615.9 1253.5,637.5 1253.6,596.6 1253.8,592.0 1253.9,558.9 1254.0,541.4 1254.2,533.7 1254.3,521.2 1254.5,558.5 1254.6,568.1 1254.7,551.9 1254.9,535.3 1255.0,501.1 1255.2,607.9 1255.3,496.8 1255.4,616.8 1255.6,660.3 1255.7,514.6 1255.9,611.3 1256.0,503.3 1256.2,591.7 1256.3,592.3 1256.4,493.3 1256.6,523.6 1256.7,645.8 1256.9,458.3 1257.0,615.1 1257.1,542.3 1257.3,460.8 1257.4,502.2 1257.6,571.9 1257.7,456.4 1257.8,538.7 1258.0,608.3 1258.1,442.2 1258.3,559.5 1258.4,597.0 1258.6,580.1 1258.7,617.6 1258.8,558.4 1259.0,559.6 1259.1,623.7 1259.3,583.1 1259.4,605.7 1259.5,483.8 1259.7,617.4 1259.8,552.7 1260.0,547.2 1260.1,553.5 1260.3,589.4 1260.4,609.2 1260.5,665.7 1260.7,615.8 1260.8,510.4 1261.0,603.9 1261.1,564.9 1261.2,600.9 1261.4,644.2 1261.5,582.2 1261.7,393.2 1261.8,585.1 1261.9,595.4 1262.1,558.7 1262.2,591.6 1262.4,610.6 1262.5,588.2 1262.7,482.0 1262.8,626.9 1262.9,629.2 1263.1,525.0 1263.2,618.7 1263.4,629.2 1263.5,609.4 1263.6,489.1 1263.8,461.4 1263.9,466.0 1264.1,364.0 1264.2,479.7 1264.3,644.5 1264.5,573.1 1264.6,562.1 1264.8,578.1 1264.9,425.4 1265.1,525.1 1265.2,573.8 1265.3,529.7 1265.5,523.2 1265.6,633.0 1265.8,597.2 1265.9,596.4 1266.0,459.6 1266.2,499.2 1266.3,600.5 1266.5,406.7 1266.6,642.1 1266.7,595.4 1266.9,616.5 1267.0,567.2 1267.2,480.3 1267.3,517.4 1267.5,652.4 1267.6,608.7 1267.7,519.8 1267.9,603.7 1268.0,509.7 1268.2,550.6 1268.3,537.0 1268.4,533.6 1268.6,558.3 1268.7,619.4 1268.9,511.4 1269.0,560.4 1269.1,532.1 1269.3,656.5 1269.4,619.9 1269.6,560.2 1269.7,514.1 1269.9,591.4 1270.0,525.9 1270.1,672.4 1270.3,650.0 1270.4,538.7 1270.6,409.1 1270.7,598.3 1270.8,595.2 1271.0,594.6 1271.1,557.9 1271.3,586.5 1271.4,591.0 1271.5,522.4 1271.7,671.8 1271.8,493.9 1272.0,528.2 1272.1,450.0 1272.3,503.3 1272.4,516.2 1272.5,601.9 1272.7,519.3 1272.8,555.0 1273.0,593.3 1273.1,512.1 1273.2,572.2 1273.4,415.9 1273.5,532.3 1273.7,490.7 1273.8,482.2 1273.9,557.1 1274.1,485.8 1274.2,555.1 1274.4,568.9 1274.5,381.9 1274.7,537.5 1274.8,538.5 1274.9,406.9 1275.1,549.7 1275.2,670.6 1275.4,541.3 1275.5,549.8 1275.6,531.2 1275.8,431.6 1275.9,529.3 1276.1,385.4 1276.2,517.8 1276.4,423.9 1276.5,580.5 1276.6,609.3 1276.8,562.7 1276.9,487.7 1277.1,497.8 1277.2,542.5 1277.3,585.3 1277.5,604.7 1277.6,657.0 1277.8,583.2 1277.9,570.3 1278.0,420.5 1278.2,560.1 1278.3,558.3 1278.5,576.0 1278.6,661.9 1278.8,603.0 1278.9,544.8 1279.0,535.3 1279.2,455.4 1279.3,573.6 1279.5,539.2 1279.6,515.8 1279.7,524.8 1279.9,630.5 1280.0,487.0 1280.2,526.0 1280.3,542.7 1280.4,331.4 1280.6,460.6 1280.7,540.8 1280.9,618.6 1281.0,557.3 1281.2,626.1 1281.3,647.0 1281.4,534.7 1281.6,529.5 1281.7,568.5 1281.9,625.9 1282.0,596.9 1282.1,634.8 1282.3,612.5 1282.4,644.0 1282.6,544.0 1282.7,520.4 1282.8,568.2 1283.0,544.4 1283.1,625.8 1283.3,479.8 1283.4,556.0 1283.6,630.8 1283.7,565.6 1283.8,577.2 1284.0,495.4 1284.1,526.9 1284.3,636.5 1284.4,546.8 1284.5,647.5 1284.7,571.6 1284.8,505.6 1285.0,619.0 1285.1,546.9 1285.2,585.1 1285.4,632.7 1285.5,489.0 1285.7,271.8 1285.8,606.2 1286.0,616.9 1286.1,592.4 1286.2,534.3 1286.4,476.6 1286.5,568.7 1286.7,670.0 1286.8,662.4 1286.9,609.7 1287.1,519.4 1287.2,622.6 1287.4,559.0 1287.5,655.5 1287.6,597.7 1287.8,544.7 1287.9,540.9 1288.1,660.2 1288.2,621.2 1288.4,612.0 1288.5,607.9 1288.6,592.3 1288.8,518.9 1288.9,635.2 1289.1,612.1 1289.2,573.5 1289.3,520.3 1289.5,522.5 1289.6,634.1 1289.8,565.7 1289.9,546.8 1290.0,580.8 1290.2,500.8 1290.3,633.8 1290.5,561.7 1290.6,534.2 1290.8,423.3 1290.9,664.7 1291.0,532.7 1291.2,595.0 1291.3,528.2 1291.5,567.0 1291.6,520.4 1291.7,623.3 1291.9,477.3 1292.0,588.1 1292.2,514.7 1292.3,602.3 1292.5,628.8 1292.6,594.7 1292.7,542.3 1292.9,474.8 1293.0,571.7 1293.2,596.2 1293.3,468.4 1293.4,529.3 1293.6,578.5 1293.7,546.3 1293.9,608.3 1294.0,571.6 1294.1,586.3 1294.3,609.7 1294.4,638.6 1294.6,612.5 1294.7,516.0 1294.9,525.2 1295.0,580.6 1295.1,491.5 1295.3,624.6 1295.4,530.7 1295.6,524.6 1295.7,643.8 1295.8,496.9 1296.0,522.0 1296.1,576.7 1296.3,572.2 1296.4,558.1 1296.5,574.6 1296.7,647.2 1296.8,581.7 1297.0,497.2 1297.1,566.1 1297.3,609.9 1297.4,480.7 1297.5,582.5 1297.7,620.0 1297.8,556.3 1298.0,621.7 1298.1,551.5 1298.2,542.0 1298.4,618.5 1298.5,599.2 1298.7,557.5 1298.8,614.0 1298.9,371.0 1299.1,531.5 1299.2,621.5 1299.4,557.4 1299.5,560.1 1299.7,590.4 1299.8,545.8 1299.9,582.1 1300.1,579.9 1300.2,587.3 1300.4,559.9 1300.5,673.2 1300.6,555.5 1300.8,632.0 1300.9,612.8 1301.1,512.7 1301.2,612.8 1301.3,552.2 1301.5,608.7 1301.6,381.5 1301.8,422.7 1301.9,596.6 1302.1,479.4 1302.2,479.8 1302.3,616.6 1302.5,590.1 1302.6,619.3 1302.8,612.6 1302.9,567.5 1303.0,571.2 1303.2,578.9 1303.3,617.6 1303.5,566.4 1303.6,459.9 1303.7,592.5 1303.9,540.3 1304.0,612.3 1304.2,527.3 1304.3,559.7 1304.5,476.7 1304.6,641.2 1304.7,546.1 1304.9,583.4 1305.0,591.1 1305.2,596.5 1305.3,483.6 1305.4,608.9 1305.6,550.5 1305.7,656.7 1305.9,446.4 1306.0,515.8 1306.1,540.1 1306.3,568.8 1306.4,592.6 1306.6,581.4 1306.7,545.7 1306.9,570.4 1307.0,487.4 1307.1,597.8 1307.3,498.4 1307.4,601.5 1307.6,627.2 1307.7,630.6 1307.8,606.9 1308.0,477.1 1308.1,516.3 1308.3,531.1 1308.4,600.6 1308.6,614.7 1308.7,592.4 1308.8,544.1 1309.0,624.0 1309.1,567.4 1309.3,591.4 1309.4,525.9 1309.5,548.5 1309.7,626.4 1309.8,600.3 1310.0,514.5 1310.1,490.1 1310.2,570.1 1310.4,509.4 1310.5,615.7 1310.7,585.9 1310.8,548.6 1311.0,656.1 1311.1,567.3 1311.2,501.9 1311.4,615.8 1311.5,663.6 1311.7,547.9 1311.8,545.6 1311.9,610.6 1312.1,597.7 1312.2,595.1 1312.4,640.0 1312.5,529.4 1312.6,615.2 1312.8,523.3 1312.9,547.3 1313.1,635.5 1313.2,528.6 1313.4,627.5 1313.5,546.1 1313.6,641.4 1313.8,559.3 1313.9,580.3 1314.1,568.2 1314.2,528.5 1314.3,530.7 1314.5,650.1 1314.6,623.9 1314.8,423.5 1314.9,581.1 1315.0,511.1 1315.2,564.1 1315.3,523.1 1315.5,643.1 1315.6,571.7 1315.8,527.8 1315.9,584.7 1316.0,535.5 1316.2,508.6 1316.3,513.1 1316.5,616.7 1316.6,482.2 1316.7,559.1 1316.9,620.4 1317.0,518.6 1317.2,608.8 1317.3,596.9 1317.4,584.5 1317.6,304.9 1317.7,622.4 1317.9,503.1 1318.0,511.8 1318.2,601.1 1318.3,440.2 1318.4,646.2 1318.6,631.7 1318.7,524.9 1318.9,610.7 1319.0,616.2 1319.1,658.4 1319.3,597.5 1319.4,642.1 1319.6,550.0 1319.7,667.4 1319.8,581.6 1320.0,491.2 1320.1,562.1 1320.3,597.4 1320.4,634.6 1320.6,455.3 1320.7,660.2 1320.8,572.2 1321.0,591.7 1321.1,524.4 1321.3,558.0 1321.4,466.3 1321.5,457.2 1321.7,533.4 1321.8,575.7 1322.0,567.0 1322.1,477.1 1322.2,531.6 1322.4,528.9 1322.5,465.6 1322.7,591.1 1322.8,509.1 1323.0,527.8 1323.1,589.5 1323.2,527.6 1323.4,634.9 1323.5,660.4 1323.7,495.7 1323.8,431.9 1323.9,582.3 1324.1,588.6 1324.2,613.4 1324.4,467.6 1324.5,608.0 1324.6,548.7 1324.8,513.2 1324.9,579.3 1325.1,452.7 1325.2,592.2 1325.4,522.9 1325.5,615.4 1325.6,575.2 1325.8,539.2 1325.9,609.3 1326.1,508.5 1326.2,465.6 1326.3,355.0 1326.5,573.2 1326.6,661.0 1326.8,586.6 1326.9,557.0 1327.1,624.4 1327.2,431.3 1327.3,622.0 1327.5,571.5 1327.6,665.1 1327.8,602.3 1327.9,516.5 1328.0,586.1 1328.2,501.5 1328.3,512.4 1328.5,582.2 1328.6,625.5 1328.7,515.0 1328.9,476.6 1329.0,610.7 1329.2,642.2 1329.3,505.4 1329.5,555.4 1329.6,608.3 1329.7,622.6 1329.9,572.9 1330.0,473.4 1330.2,623.5 1330.3,534.7 1330.4,609.3 1330.6,558.1 1330.7,580.6 1330.9,562.2 1331.0,629.4 1331.1,499.8 1331.3,419.9 1331.4,573.0 1331.6,586.9 1331.7,520.0 1331.9,623.3 1332.0,643.4 1332.1,536.0 1332.3,565.4 1332.4,551.5 1332.6,655.8 1332.7,499.7 1332.8,545.2 1333.0,634.0 1333.1,546.4 1333.3,428.3 1333.4,608.7 1333.5,463.7 1333.7,451.7 1333.8,506.5 1334.0,574.3 1334.1,580.6 1334.3,593.0 1334.4,521.1 1334.5,626.5 1334.7,567.6 1334.8,565.5 1335.0,471.5 1335.1,482.8 1335.2,575.2 1335.4,557.3 1335.5,538.0 1335.7,566.0 1335.8,604.8 1335.9,625.0 1336.1,563.0 1336.2,582.1 1336.4,606.8 1336.5,595.6 1336.7,651.2 1336.8,564.2 1336.9,642.0 1337.1,635.2 1337.2,524.5 1337.4,634.7 1337.5,539.7 1337.6,574.3 1337.8,611.0 1337.9,561.7 1338.1,569.4 1338.2,482.1 1338.3,447.7 1338.5,578.0 1338.6,592.7 1338.8,559.3 1338.9,634.0 1339.1,568.5 1339.2,636.6 1339.3,606.1 1339.5,527.7 1339.6,525.0 1339.8,576.2 1339.9,448.5 1340.0,626.4 1340.2,600.5 1340.3,558.4 1340.5,580.9 1340.6,549.0 1340.7,639.1 1340.9,535.8 1341.0,624.4 1341.2,606.9 1341.3,621.5 1341.5,535.6 1341.6,652.1 1341.7,433.4 1341.9,591.5 1342.0,612.8 1342.2,598.5 1342.3,573.5 1342.4,613.2 1342.6,527.0 1342.7,528.4 1342.9,552.4 1343.0,484.3 1343.2,535.3 1343.3,624.9 1343.4,607.8 1343.6,576.4 1343.7,601.0 1343.9,588.2 1344.0,576.7 1344.1,522.1 1344.3,566.2 1344.4,508.2 1344.6,556.0 1344.7,666.5 1344.8,414.3 1345.0,627.4 1345.1,588.4 1345.3,659.9 1345.4,569.2 1345.6,543.9 1345.7,604.3 1345.8,473.7 1346.0,626.8 1346.1,461.3 1346.3,521.6 1346.4,626.4 1346.5,636.1 1346.7,644.6 1346.8,560.9 1347.0,610.0 1347.1,441.3 1347.2,633.5 1347.4,516.4 1347.5,591.4 1347.7,662.3 1347.8,532.7 1348.0,559.5 1348.1,613.4 1348.2,594.3 1348.4,626.9 1348.5,629.7 1348.7,562.4 1348.8,567.1 1348.9,617.7 1349.1,603.0 1349.2,487.0 1349.4,594.7 1349.5,575.0 1349.6,625.2 1349.8,657.6 1349.9,555.5 1350.1,611.6 1350.2,531.4 1350.4,613.2 1350.5,592.4 1350.6,549.5 1350.8,541.6 1350.9,596.1 1351.1,534.7 1351.2,563.5 1351.3,514.7 1351.5,528.4 1351.6,513.0 1351.8,608.0 1351.9,640.9 1352.0,670.8 1352.2,598.1 1352.3,585.9 1352.5,607.9 1352.6,625.1 1352.8,584.0 1352.9,601.8 1353.0,654.8 1353.2,508.9 1353.3,570.2 1353.5,622.5 1353.6,598.2 1353.7,561.5 1353.9,637.4 1354.0,570.3 1354.2,532.9 1354.3,624.4 1354.4,571.9 1354.6,489.1 1354.7,539.5 1354.9,581.1 1355.0,657.4 1355.2,472.9 1355.3,427.2 1355.4,522.6 1355.6,613.6 1355.7,560.5 1355.9,517.8 1356.0,568.6 1356.1,443.2 1356.3,558.3 1356.4,667.8 1356.6,603.2 1356.7,475.6 1356.8,428.8 1357.0,477.3 1357.1,617.4 1357.3,609.7 1357.4,556.9 1357.6,653.9 1357.7,491.3 1357.8,574.9 1358.0,534.2 1358.1,555.6 1358.3,593.8 1358.4,486.6 1358.5,611.3 1358.7,571.5 1358.8,585.1 1359.0,536.8 1359.1,538.9 1359.3,580.6 1359.4,598.3 1359.5,617.0 1359.7,650.1 1359.8,582.3 1360.0,670.8 1360.1,595.0 1360.2,445.2 1360.4,549.0 1360.5,586.2 1360.7,465.2 1360.8,389.1 1360.9,524.6 1361.1,602.2 1361.2,493.5 1361.4,521.3 1361.5,549.6 1361.7,578.1 1361.8,607.5 1361.9,603.2 1362.1,570.8 1362.2,572.8 1362.4,580.6 1362.5,520.2 1362.6,610.6 1362.8,632.1 1362.9,623.3 1363.1,554.7 1363.2,654.9 1363.3,601.2 1363.5,623.5 1363.6,656.8 1363.8,466.1 1363.9,593.5 1364.1,487.7 1364.2,576.3 1364.3,443.8 1364.5,629.1 1364.6,592.5 1364.8,610.7 1364.9,530.8 1365.0,611.6 1365.2,564.5 1365.3,620.3 1365.5,644.6 1365.6,492.4 1365.7,525.9 1365.9,520.8 1366.0,586.5 1366.2,505.5 1366.3,643.9 1366.5,605.6 1366.6,586.4 1366.7,462.5 1366.9,659.4 1367.0,533.1 1367.2,644.9 1367.3,623.2 1367.4,611.2 1367.6,581.8 1367.7,486.6 1367.9,503.3 1368.0,600.6 1368.1,422.9 1368.3,646.1 1368.4,646.7 1368.6,576.5 1368.7,597.1 1368.9,499.6 1369.0,657.4 1369.1,494.8 1369.3,605.7 1369.4,521.8 1369.6,661.4 1369.7,482.0 1369.8,512.5 1370.0,560.9 1370.1,511.1 1370.3,519.1 1370.4,504.5 1370.5,543.9 1370.7,444.4 1370.8,561.9 1371.0,541.3 1371.1,577.4 1371.3,280.7 1371.4,658.7 1371.5,533.5 1371.7,611.8 1371.8,545.8 1372.0,622.6 1372.1,596.9 1372.2,543.4 1372.4,587.2 1372.5,547.4 1372.7,550.7 1372.8,634.1 1372.9,542.1 1373.1,606.3 1373.2,584.9 1373.4,571.9 1373.5,591.5 1373.7,608.6 1373.8,625.1 1373.9,554.0 1374.1,529.9 1374.2,620.1 1374.4,557.8 1374.5,630.8 1374.6,551.1 1374.8,603.4 1374.9,594.6 1375.1,546.4 1375.2,579.3 1375.4,581.4 1375.5,602.7 1375.6,516.5 1375.8,602.6 1375.9,550.4 1376.1,646.6 1376.2,484.4 1376.3,448.7 1376.5,621.5 1376.6,582.6 1376.8,635.5 1376.9,586.6 1377.0,500.6 1377.2,559.5 1377.3,629.6 1377.5,445.4 1377.6,565.3 1377.8,642.9 1377.9,593.6 1378.0,628.1 1378.2,495.5 1378.3,589.9 1378.5,574.1 1378.6,509.3 1378.7,563.7 1378.9,649.7 1379.0,642.9 1379.2,623.2 1379.3,545.9 1379.4,555.8 1379.6,594.8 1379.7,601.4 1379.9,641.5 1380.0,644.1 1380.2,552.8 1380.3,521.2 1380.4,573.8 1380.6,543.4 1380.7,581.8 1380.9,648.1 1381.0,671.4 1381.1,519.7 1381.3,501.2 1381.4,425.7 1381.6,602.2 1381.7,534.7 1381.8,533.4 1382.0,547.6 1382.1,514.8 1382.3,458.6 1382.4,618.6 1382.6,535.9 1382.7,586.9 1382.8,513.1 1383.0,483.9 1383.1,468.6 1383.3,530.0 1383.4,480.6 1383.5,633.5 1383.7,638.5 1383.8,586.4 1384.0,537.5 1384.1,518.5 1384.2,510.5 1384.4,630.9 1384.5,544.4 1384.7,566.0 1384.8,624.4 1385.0,578.0 1385.1,526.1 1385.2,624.8 1385.4,491.4 1385.5,624.9 1385.7,641.2 1385.8,594.2 1385.9,525.4 1386.1,526.1 1386.2,502.2 1386.4,622.3 1386.5,616.0 1386.6,617.9 1386.8,617.7 1386.9,585.6 1387.1,392.3 1387.2,545.7 1387.4,597.6 1387.5,455.3 1387.6,564.9 1387.8,652.8 1387.9,643.2 1388.1,566.2 1388.2,619.9 1388.3,608.1 1388.5,592.9 1388.6,559.5 1388.8,475.0 1388.9,639.8 1389.0,479.3 1389.2,584.6 1389.3,601.9 1389.5,605.2 1389.6,595.2 1389.8,586.1 1389.9,589.5 1390.0,508.0 1390.2,597.8 1390.3,612.7 1390.5,474.7 1390.6,525.5 1390.7,656.5 1390.9,566.0 1391.0,554.7 1391.2,627.9 1391.3,598.7 1391.5,622.2 1391.6,640.5 1391.7,572.6 1391.9,643.2 1392.0,580.2 1392.2,577.7 1392.3,559.6 1392.4,505.8 1392.6,657.1 1392.7,622.6 1392.9,547.7 1393.0,585.1 1393.1,622.4 1393.3,620.7 1393.4,621.1 1393.6,480.7 1393.7,591.9 1393.9,563.0 1394.0,563.7 1394.1,530.9 1394.3,577.2 1394.4,591.1 1394.6,539.3 1394.7,600.0 1394.8,637.7 1395.0,497.6 1395.1,474.4 1395.3,580.9 1395.4,537.5 1395.5,375.0 1395.7,591.9 1395.8,622.2 1396.0,625.9 1396.1,498.5 1396.3,412.3 1396.4,582.1 1396.5,434.4 1396.7,578.5 1396.8,581.6 1397.0,608.4 1397.1,564.4 1397.2,590.6 1397.4,502.1 1397.5,462.6 1397.7,539.5 1397.8,583.8 1397.9,594.1 1398.1,444.8 1398.2,545.7 1398.4,554.9 1398.5,674.4 1398.7,423.4 1398.8,598.2 1398.9,574.4 1399.1,625.0 1399.2,451.4 1399.4,496.9 1399.5,589.9 1399.6,521.6 1399.8,541.2 1399.9,500.9 1400.1,636.8 1400.2,641.9 1400.3,597.2 1400.5,576.4 1400.6,613.9 1400.8,626.2 1400.9,614.1 1401.1,458.1 1401.2,518.6 1401.3,626.8 1401.5,585.1 1401.6,509.4 1401.8,607.8 1401.9,571.6 1402.0,605.5 1402.2,477.1 1402.3,573.2 1402.5,387.0 1402.6,535.0 1402.7,613.5 1402.9,610.4 1403.0,478.7 1403.2,493.9 1403.3,623.3 1403.5,637.5 1403.6,498.1 1403.7,584.8 1403.9,528.0 1404.0,596.7 1404.2,646.3 1404.3,632.7 1404.4,579.9 1404.6,533.6 1404.7,485.5 1404.9,602.3 1405.0,586.3 1405.1,539.9 1405.3,544.0 1405.4,525.7 1405.6,532.8 1405.7,570.7 1405.9,531.1 1406.0,582.7 1406.1,526.0 1406.3,580.8 1406.4,635.2 1406.6,518.9 1406.7,626.4 1406.8,568.4 1407.0,536.0 1407.1,554.7 1407.3,565.8 1407.4,438.8 1407.5,609.3 1407.7,574.8 1407.8,534.0 1408.0,433.1 1408.1,613.5 1408.3,654.5 1408.4,519.5 1408.5,552.2 1408.7,582.8 1408.8,485.2 1409.0,437.2 1409.1,593.4 1409.2,586.2 1409.4,565.9 1409.5,591.5 1409.7,583.2 1409.8,613.7 1410.0,512.4 1410.1,583.0 1410.2,488.9 1410.4,516.1 1410.5,575.6 1410.7,619.2 1410.8,662.5 1410.9,607.0 1411.1,518.8 1411.2,567.0 1411.4,528.4 1411.5,637.7 1411.6,531.9 1411.8,422.7 1411.9,657.4 1412.1,630.9 1412.2,506.9 1412.4,592.3 1412.5,600.9 1412.6,508.4 1412.8,498.4 1412.9,405.3 1413.1,611.5 1413.2,563.2 1413.3,637.8 1413.5,574.6 1413.6,511.7 1413.8,599.3 1413.9,573.4 1414.0,548.8 1414.2,644.0 1414.3,605.8 1414.5,594.4 1414.6,484.3 1414.8,543.6 1414.9,556.3 1415.0,613.1 1415.2,507.3 1415.3,615.3 1415.5,528.7 1415.6,608.1 1415.7,466.7 1415.9,648.6 1416.0,635.1 1416.2,494.0 1416.3,625.2 1416.4,562.2 1416.6,595.6 1416.7,563.5 1416.9,557.8 1417.0,579.1 1417.2,575.8 1417.3,535.6 1417.4,622.3 1417.6,542.8 1417.7,655.6 1417.9,524.6 1418.0,588.9 1418.1,546.0 1418.3,628.2 1418.4,455.7 1418.6,481.5 1418.7,500.4 1418.8,518.0 1419.0,533.0 1419.1,659.8 1419.3,579.9 1419.4,618.1 1419.6,643.5 1419.7,543.5 1419.8,405.8 1420.0,445.1 1420.1,591.0 1420.3,614.9 1420.4,559.6 1420.5,630.6 1420.7,517.5 1420.8,493.3 1421.0,558.2 1421.1,497.8 1421.2,619.2 1421.4,499.8 1421.5,601.4 1421.7,573.8 1421.8,481.8 1422.0,574.8 1422.1,521.9 1422.2,617.3 1422.4,650.3 1422.5,469.9 1422.7,483.3 1422.8,525.8 1422.9,576.1 1423.1,614.6 1423.2,652.5 1423.4,506.6 1423.5,493.2 1423.6,613.0 1423.8,551.0 1423.9,574.7 1424.1,576.8 1424.2,578.1 1424.4,573.7 1424.5,645.5 1424.6,615.6 1424.8,613.9 1424.9,589.8 1425.1,591.9 1425.2,433.7 1425.3,480.3 1425.5,543.6 1425.6,594.2 1425.8,566.0 1425.9,578.7 1426.1,594.4 1426.2,507.6 1426.3,528.4 1426.5,540.6 1426.6,594.1 1426.8,589.5 1426.9,595.7 1427.0,545.5 1427.2,536.3 1427.3,520.2 1427.5,565.6 1427.6,604.8 1427.7,522.1 1427.9,556.8 1428.0,455.3 1428.2,593.9 1428.3,625.8 1428.5,512.6 1428.6,672.2 1428.7,626.4 1428.9,559.0 1429.0,545.1 1429.2,611.5 1429.3,655.0 1429.4,567.6 1429.6,527.3 1429.7,411.0 1429.9,602.9 1430.0,603.6 1430.1,542.1 1430.3,525.9 1430.4,606.3 1430.6,635.7 1430.7,611.8 1430.9,611.9 1431.0,573.8 1431.1,620.8 1431.3,643.5 1431.4,453.6 1431.6,559.5 1431.7,661.3 1431.8,540.7 1432.0,622.8 1432.1,590.8 1432.3,568.5 1432.4,537.3 1432.5,455.7 1432.7,611.8 1432.8,652.8 1433.0,619.7 1433.1,600.3 1433.3,617.0 1433.4,587.0 1433.5,586.3 1433.7,467.5 1433.8,466.3 1434.0,584.9 1434.1,595.4 1434.2,498.4 1434.4,543.4 1434.5,497.2 1434.7,587.0 1434.8,659.3 1434.9,604.8 1435.1,619.6 1435.2,557.3 1435.4,562.3 1435.5,635.7 1435.7,522.4 1435.8,547.1 1435.9,588.3 1436.1,584.8 1436.2,580.7 1436.4,546.7 1436.5,577.8 1436.6,491.9 1436.8,556.3 1436.9,595.7 1437.1,528.1 1437.2,564.0 1437.3,621.7 1437.5,550.2 1437.6,494.0 1437.8,581.6 1437.9,564.1 1438.1,643.6 1438.2,648.1 1438.3,611.2 1438.5,466.3 1438.6,636.8 1438.8,602.1 1438.9,551.3 1439.0,495.4 1439.2,459.8 1439.3,554.2 1439.5,651.3 1439.6,584.8 1439.7,493.3 1439.9,603.7 1440.0,668.2 1440.2,482.1 1440.3,496.4 1440.5,538.5 1440.6,625.4 1440.7,540.5 1440.9,632.9 1441.0,612.3 1441.2,658.4 1441.3,617.5 1441.4,497.7 1441.6,534.8 1441.7,548.1 1441.9,560.7 1442.0,617.0 1442.2,640.8 1442.3,611.6 1442.4,507.3 1442.6,573.7 1442.7,644.6 1442.9,607.1 1443.0,583.2 1443.1,623.9 1443.3,636.5 1443.4,577.7 1443.6,501.8 1443.7,615.0 1443.8,585.6 1444.0,387.0 1444.1,566.5 1444.3,556.0 1444.4,541.2 1444.6,519.7 1444.7,648.9 1444.8,565.6 1445.0,640.8 1445.1,626.7 1445.3,649.5 1445.4,624.1 1445.5,502.7 1445.7,625.1 1445.8,659.5 1446.0,611.6 1446.1,530.3 1446.2,571.9 1446.4,569.7 1446.5,551.2 1446.7,602.9 1446.8,525.8 1447.0,577.3 1447.1,603.6 1447.2,610.4 1447.4,432.6 1447.5,526.4 1447.7,568.0 1447.8,574.4 1447.9,560.0 1448.1,658.4 1448.2,641.6 1448.4,553.3 1448.5,549.1 1448.6,497.3 1448.8,558.7 1448.9,536.0 1449.1,566.6 1449.2,590.4 1449.4,582.7 1449.5,464.6 1449.6,478.1 1449.8,499.6 1449.9,565.5 1450.1,617.9 1450.2,642.7 1450.3,489.2 1450.5,637.4 1450.6,597.0 1450.8,520.3 1450.9,619.1 1451.0,524.2 1451.2,614.3 1451.3,527.1 1451.5,542.2 1451.6,607.0 1451.8,599.6 1451.9,596.0 1452.0,564.8 1452.2,490.7 1452.3,569.6 1452.5,588.4 1452.6,592.0 1452.7,624.2 1452.9,549.8 1453.0,577.1 1453.2,495.4 1453.3,574.2 1453.4,463.4 1453.6,585.1 1453.7,574.2 1453.9,623.0 1454.0,526.2 1454.2,656.7 1454.3,623.6 1454.4,602.9 1454.6,513.6 1454.7,559.7 1454.9,604.0 1455.0,487.2 1455.1,515.8 1455.3,655.9 1455.4,613.6 1455.6,545.0 1455.7,504.3 1455.8,536.4 1456.0,499.7 1456.1,633.0 1456.3,666.6 1456.4,585.0 1456.6,646.4 1456.7,551.3 1456.8,487.0 1457.0,588.2 1457.1,564.8 1457.3,592.6 1457.4,626.1 1457.5,634.6 1457.7,541.6 1457.8,492.0 1458.0,595.8 1458.1,631.2 1458.3,516.5 1458.4,610.7 1458.5,531.3 1458.7,553.0 1458.8,603.7 1459.0,575.0 1459.1,595.2 1459.2,633.1 1459.4,616.5 1459.5,566.0 1459.7,528.5 1459.8,640.0 1459.9,620.5 1460.1,664.4 1460.2,431.5 1460.4,636.8 1460.5,593.8 1460.7,648.5 1460.8,576.6 1460.9,556.5 1461.1,573.2 1461.2,548.7 1461.4,617.8 1461.5,487.9 1461.6,531.3 1461.8,622.0 1461.9,583.5 1462.1,660.2 1462.2,516.8 1462.3,495.5 1462.5,573.3 1462.6,596.8 1462.8,524.3 1462.9,597.5 1463.1,650.9 1463.2,551.2 1463.3,590.1 1463.5,591.6 1463.6,574.8 1463.8,635.0 1463.9,527.9 1464.0,460.7 1464.2,634.0 1464.3,602.3 1464.5,579.0 1464.6,543.6 1464.7,544.3 1464.9,557.9 1465.0,506.9 1465.2,538.0 1465.3,658.9 1465.5,451.8 1465.6,517.1 1465.7,549.5 1465.9,528.0 1466.0,517.9 1466.2,650.2 1466.3,556.2" fill="none" stroke="#0072bd" stroke-width="1" stroke-linejoin="round"/><g fill="#262626" font-family='"Liberation Sans", sans-serif' font-size="20"><text x="878.5" y="707" text-anchor="middle">50</text><text x="944.5" y="707" text-anchor="middle">100</text><text x="1009.5" y="707" text-anchor="middle">150</text><text x="1074.5" y="707" text-anchor="middle">200</text><text x="1140.5" y="707" text-anchor="middle">250</text><text x="1205.5" y="707" text-anchor="middle">300</text><text x="1270.5" y="707" text-anchor="middle">350</text><text x="1335.5" y="707" text-anchor="middle">400</text><text x="1401.5" y="707" text-anchor="middle">450</text><text x="1466.5" y="707" text-anchor="middle">500</text><text x="807.6" y="685.7" text-anchor="end">0</text><text x="807.6" y="635.7" text-anchor="end">0.001</text><text x="807.6" y="585.7" text-anchor="end">0.002</text><text x="807.6" y="535.7" text-anchor="end">0.003</text><text x="807.6" y="484.7" text-anchor="end">0.004</text><text x="807.6" y="434.7" text-anchor="end">0.005</text><text x="807.6" y="384.7" text-anchor="end">0.006</text><text x="807.6" y="334.7" text-anchor="end">0.007</text><text x="807.6" y="284.7" text-anchor="end">0.008</text><text x="807.6" y="233.7" text-anchor="end">0.009</text><text x="807.6" y="183.7" text-anchor="end">0.01</text><text x="1141.5" y="737.5" text-anchor="middle" font-size="22" letter-spacing="0.15">Frequenz [Hz]</text><text transform="translate(746.2,420.5) rotate(-90)" text-anchor="middle" font-size="22" letter-spacing="0.12">Amplitude</text></g></svg>
<div id="shadow"></div>
<div id="b-top"></div><div id="b-left"></div><div id="b-mid"></div><div id="b-mid2"></div><div id="b-right"></div>
</body></html>
